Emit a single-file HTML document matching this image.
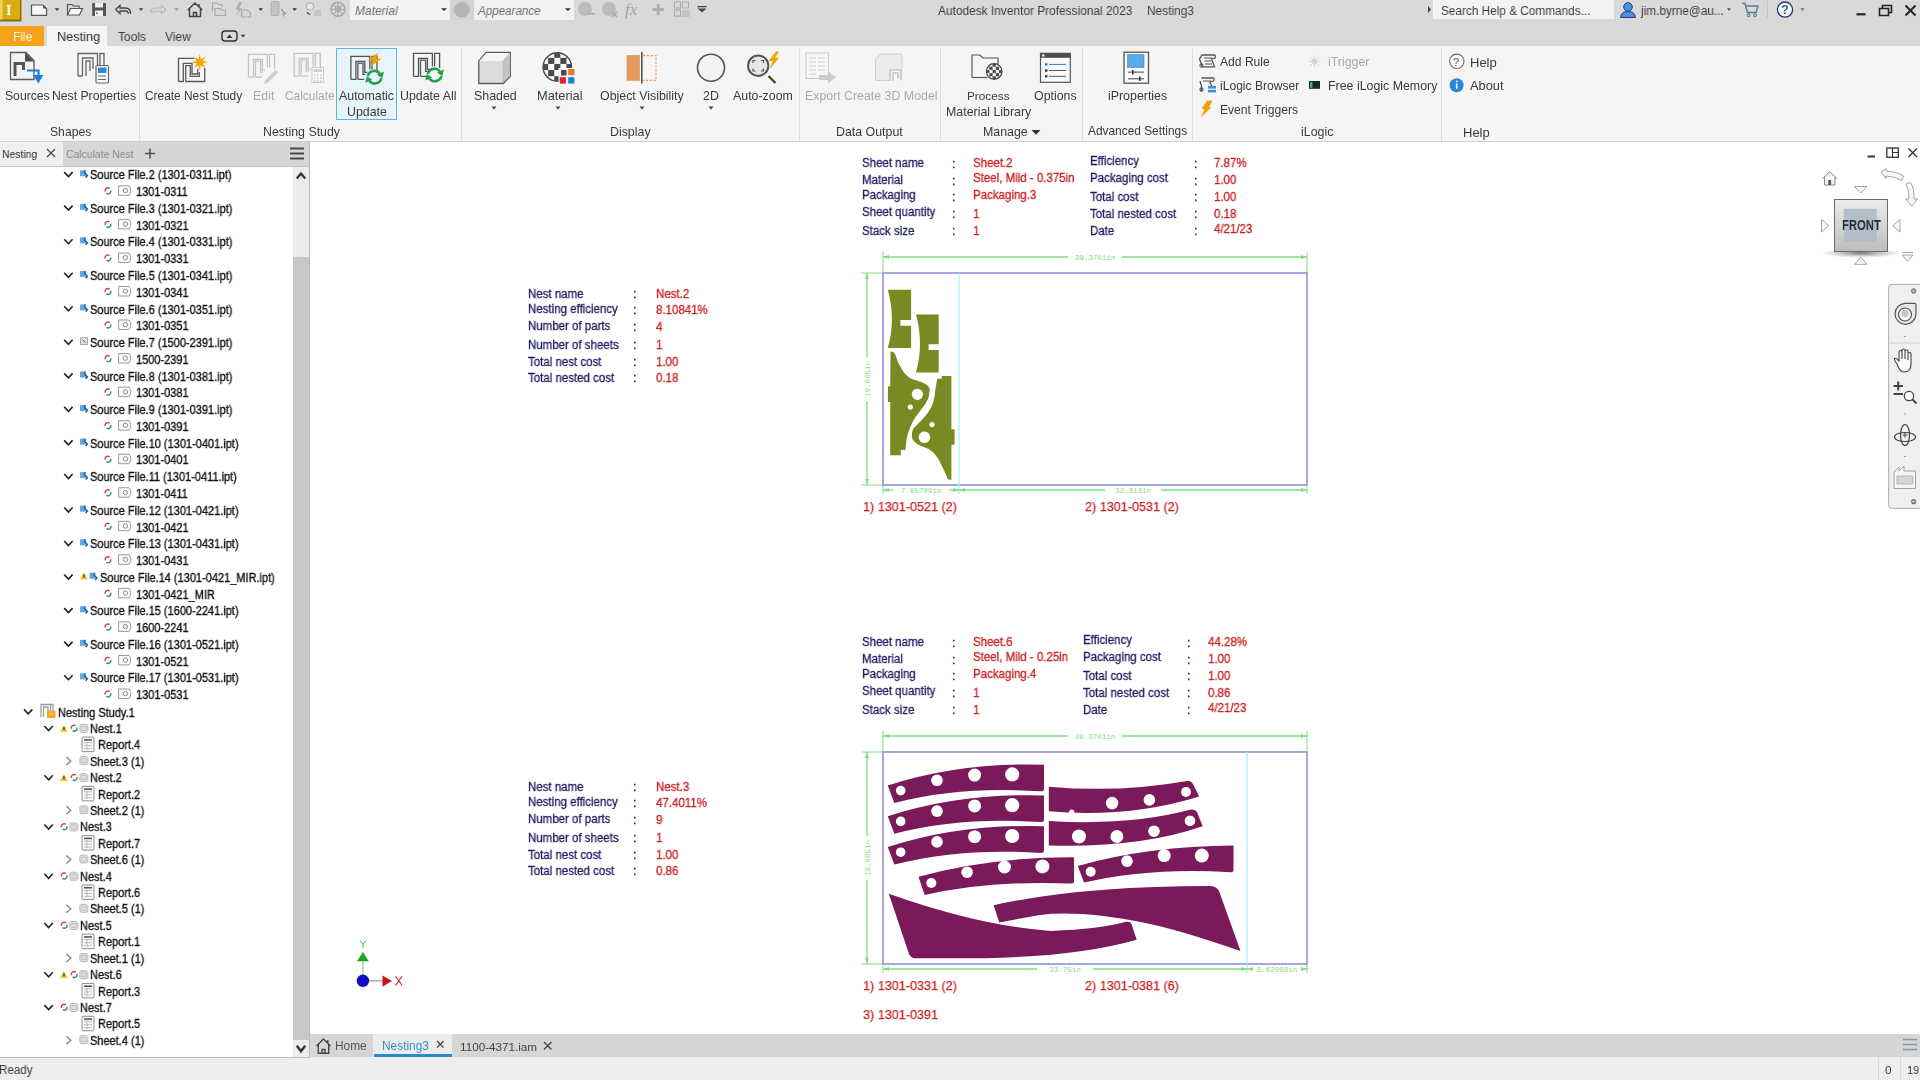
<!DOCTYPE html><html><head><meta charset="utf-8"><style>
*{margin:0;padding:0;box-sizing:border-box}
html,body{width:1920px;height:1080px;overflow:hidden;background:#fff;font-family:"Liberation Sans",sans-serif}
.t{position:absolute;white-space:pre;z-index:3;will-change:transform}
svg.r{z-index:2}
.r{position:absolute;display:block}
</style></head><body>
<div class="r" style="left:0px;top:0px;width:1920px;height:46px;background:#d9d9d9"></div>
<div class="r" style="left:0px;top:46px;width:1920px;height:95px;background:#f5f5f5"></div>
<div class="r" style="left:0px;top:141px;width:1920px;height:1px;background:#d0d0d0"></div>
<div class="r" style="left:0px;top:142px;width:310px;height:915px;background:#ffffff"></div>
<div class="r" style="left:0px;top:142px;width:310px;height:24px;background:#d6d6d6"></div>
<div class="r" style="left:0px;top:142px;width:63px;height:24px;background:#f0f0f0"></div>
<div class="r" style="left:0px;top:166px;width:310px;height:1px;background:#c4c4c4"></div>
<div class="r" style="left:309px;top:142px;width:1px;height:916px;background:#b9b9b9"></div>
<div class="r" style="left:293px;top:167px;width:16px;height:890px;background:#ececec"></div>
<div class="r" style="left:293px;top:257px;width:16px;height:783px;background:#c8c8c8"></div>
<div class="r" style="left:310px;top:142px;width:1610px;height:892px;background:#ffffff"></div>
<div class="r" style="left:310px;top:1034px;width:1610px;height:23px;background:#d6d6d6"></div>
<div class="r" style="left:373px;top:1034px;width:79px;height:23px;background:#ececec"></div>
<div class="r" style="left:374px;top:1054px;width:78px;height:3px;background:#2a8bc2"></div>
<div class="r" style="left:0px;top:1057px;width:1920px;height:23px;background:#eeeeee"></div>
<div class="r" style="left:0px;top:1057px;width:310px;height:1px;background:#bdbdbd"></div>
<div class="r" style="left:1878px;top:1057px;width:1px;height:23px;background:#d8d8d8"></div>
<div class="r" style="left:1900px;top:1057px;width:1px;height:23px;background:#d8d8d8"></div>
<div class="t " style="left:938px;top:4.92px;font-size:12.61px;line-height:12.61px;color:#3c3c3c;transform:scaleX(0.9434);transform-origin:0 0;">Autodesk Inventor Professional 2023</div>
<div class="t " style="left:1147px;top:4.92px;font-size:12.61px;line-height:12.61px;color:#3c3c3c;transform:scaleX(0.9434);transform-origin:0 0;">Nesting3</div>
<div class="r" style="left:350px;top:0px;width:100px;height:20px;background:#f2f2f2"></div>
<div class="t " style="left:355px;top:4.83px;font-size:12.72px;line-height:12.72px;color:#6e6e6e;transform:scaleX(0.9434);transform-origin:0 0;font-style:italic">Material</div>
<div class="r" style="left:474px;top:0px;width:100px;height:20px;background:#f2f2f2"></div>
<div class="t " style="left:478px;top:5.19px;font-size:12.30px;line-height:12.30px;color:#6e6e6e;transform:scaleX(0.9434);transform-origin:0 0;font-style:italic">Appearance</div>
<div class="r" style="left:1433px;top:0px;width:181px;height:19px;background:#f3f3f3"></div>
<div class="t " style="left:1441px;top:5.01px;font-size:12.51px;line-height:12.51px;color:#3c3c3c;transform:scaleX(0.9434);transform-origin:0 0;">Search Help &amp; Commands...</div>
<div class="t " style="left:1641px;top:5.01px;font-size:12.51px;line-height:12.51px;color:#3c3c3c;transform:scaleX(0.9434);transform-origin:0 0;">jim.byrne@au...</div>
<div class="r" style="left:0px;top:26px;width:44px;height:20px;background:#f5a21b"></div>
<div class="t " style="left:13px;top:30.73px;font-size:12.72px;line-height:12.72px;color:#fffbe6;transform:scaleX(0.9434);transform-origin:0 0;">File</div>
<div class="r" style="left:47px;top:26px;width:60px;height:20px;background:#f5f5f5"></div>
<div class="t " style="left:56.5px;top:30.10px;font-size:13.46px;line-height:13.46px;color:#2a2a2a;transform:scaleX(0.9434);transform-origin:0 0;">Nesting</div>
<div class="t " style="left:118px;top:30.73px;font-size:12.72px;line-height:12.72px;color:#3c3c3c;transform:scaleX(0.9434);transform-origin:0 0;">Tools</div>
<div class="t " style="left:165px;top:30.73px;font-size:12.72px;line-height:12.72px;color:#3c3c3c;transform:scaleX(0.9434);transform-origin:0 0;">View</div>
<div class="r" style="left:139px;top:48px;width:1px;height:93px;background:#dcdcdc"></div>
<div class="r" style="left:461px;top:48px;width:1px;height:93px;background:#dcdcdc"></div>
<div class="r" style="left:799px;top:48px;width:1px;height:93px;background:#dcdcdc"></div>
<div class="r" style="left:940px;top:48px;width:1px;height:93px;background:#dcdcdc"></div>
<div class="r" style="left:1082px;top:48px;width:1px;height:93px;background:#dcdcdc"></div>
<div class="r" style="left:1192px;top:48px;width:1px;height:93px;background:#dcdcdc"></div>
<div class="r" style="left:1441px;top:48px;width:1px;height:93px;background:#dcdcdc"></div>
<div class="t " style="left:5px;top:90.29px;font-size:12.18px;line-height:12.18px;color:#3a3a3a;">Sources</div>
<div class="t " style="left:52px;top:90.27px;font-size:12.20px;line-height:12.20px;color:#3a3a3a;">Nest Properties</div>
<div class="t " style="left:145px;top:90.53px;font-size:11.90px;line-height:11.90px;color:#3a3a3a;">Create Nest Study</div>
<div class="t " style="left:253px;top:90.11px;font-size:12.39px;line-height:12.39px;color:#a9a9a9;">Edit</div>
<div class="t " style="left:285px;top:90.53px;font-size:11.90px;line-height:11.90px;color:#a9a9a9;">Calculate</div>
<div class="r" style="left:336px;top:48px;width:61px;height:72px;background:#e8f4fb;border:1px solid #5db3e3"></div>
<div class="t " style="left:339px;top:90.11px;font-size:12.39px;line-height:12.39px;color:#3a3a3a;">Automatic</div>
<div class="t " style="left:347px;top:106.11px;font-size:12.39px;line-height:12.39px;color:#3a3a3a;">Update</div>
<div class="t " style="left:400px;top:90.11px;font-size:12.39px;line-height:12.39px;color:#3a3a3a;">Update All</div>
<div class="t " style="left:474px;top:90.11px;font-size:12.39px;line-height:12.39px;color:#3a3a3a;">Shaded</div>
<div class="t " style="left:536.5px;top:89.76px;font-size:12.80px;line-height:12.80px;color:#3a3a3a;">Material</div>
<div class="t " style="left:600px;top:90.11px;font-size:12.39px;line-height:12.39px;color:#3a3a3a;">Object Visibility</div>
<div class="t " style="left:703px;top:90.11px;font-size:12.39px;line-height:12.39px;color:#3a3a3a;">2D</div>
<div class="t " style="left:733px;top:90.11px;font-size:12.39px;line-height:12.39px;color:#3a3a3a;">Auto-zoom</div>
<div class="t " style="left:805px;top:90.11px;font-size:12.39px;line-height:12.39px;color:#a9a9a9;">Export</div>
<div class="t " style="left:844px;top:90.11px;font-size:12.39px;line-height:12.39px;color:#a9a9a9;">Create 3D Model</div>
<div class="t " style="left:967px;top:90.61px;font-size:11.80px;line-height:11.80px;color:#3a3a3a;">Process</div>
<div class="t " style="left:946px;top:106.11px;font-size:12.39px;line-height:12.39px;color:#3a3a3a;">Material Library</div>
<div class="t " style="left:1034px;top:90.11px;font-size:12.39px;line-height:12.39px;color:#3a3a3a;">Options</div>
<div class="t " style="left:1108px;top:90.11px;font-size:12.39px;line-height:12.39px;color:#3a3a3a;">iProperties</div>
<div class="t " style="left:1220px;top:56.26px;font-size:12.10px;line-height:12.10px;color:#3a3a3a;">Add Rule</div>
<div class="t " style="left:1220px;top:80.26px;font-size:12.10px;line-height:12.10px;color:#3a3a3a;">iLogic Browser</div>
<div class="t " style="left:1220px;top:104.26px;font-size:12.10px;line-height:12.10px;color:#3a3a3a;">Event Triggers</div>
<div class="t " style="left:1328px;top:56.01px;font-size:12.39px;line-height:12.39px;color:#a9a9a9;">iTrigger</div>
<div class="t " style="left:1328px;top:80.01px;font-size:12.39px;line-height:12.39px;color:#3a3a3a;">Free iLogic Memory</div>
<div class="t " style="left:1470px;top:55.50px;font-size:13.00px;line-height:13.00px;color:#3a3a3a;">Help</div>
<div class="t " style="left:1470px;top:79.66px;font-size:12.80px;line-height:12.80px;color:#3a3a3a;">About</div>
<div class="t " style="left:50px;top:126.19px;font-size:12.18px;line-height:12.18px;color:#3a3a3a;">Shapes</div>
<div class="t " style="left:263px;top:126.01px;font-size:12.39px;line-height:12.39px;color:#3a3a3a;">Nesting Study</div>
<div class="t " style="left:610px;top:126.01px;font-size:12.39px;line-height:12.39px;color:#3a3a3a;">Display</div>
<div class="t " style="left:836px;top:126.01px;font-size:12.39px;line-height:12.39px;color:#3a3a3a;">Data Output</div>
<div class="t " style="left:983px;top:126.01px;font-size:12.39px;line-height:12.39px;color:#3a3a3a;">Manage</div>
<div class="t " style="left:1088px;top:126.43px;font-size:11.90px;line-height:11.90px;color:#3a3a3a;">Advanced Settings</div>
<div class="t " style="left:1301px;top:126.01px;font-size:12.39px;line-height:12.39px;color:#3a3a3a;">iLogic</div>
<div class="t " style="left:1463px;top:125.50px;font-size:13.00px;line-height:13.00px;color:#3a3a3a;">Help</div>
<div class="t " style="left:2px;top:149.17px;font-size:11.02px;line-height:11.02px;color:#2a2a2a;transform:scaleX(0.9434);transform-origin:0 0;">Nesting</div>
<div class="t " style="left:66px;top:149.17px;font-size:11.02px;line-height:11.02px;color:#8a8a8a;transform:scaleX(0.9434);transform-origin:0 0;">Calculate Nest</div>
<div class="t " style="left:89.6px;top:169.35px;font-size:11.99px;line-height:11.99px;color:#111;transform:scaleX(0.9174);transform-origin:0 0;-webkit-text-stroke:0.35px #111;">Source File.2 (1301-0311.ipt)</div>
<div class="t " style="left:136px;top:186.12px;font-size:11.99px;line-height:11.99px;color:#111;transform:scaleX(0.9174);transform-origin:0 0;-webkit-text-stroke:0.35px #111;">1301-0311</div>
<div class="t " style="left:89.6px;top:202.89px;font-size:11.99px;line-height:11.99px;color:#111;transform:scaleX(0.9174);transform-origin:0 0;-webkit-text-stroke:0.35px #111;">Source File.3 (1301-0321.ipt)</div>
<div class="t " style="left:136px;top:219.66px;font-size:11.99px;line-height:11.99px;color:#111;transform:scaleX(0.9174);transform-origin:0 0;-webkit-text-stroke:0.35px #111;">1301-0321</div>
<div class="t " style="left:89.6px;top:236.43px;font-size:11.99px;line-height:11.99px;color:#111;transform:scaleX(0.9174);transform-origin:0 0;-webkit-text-stroke:0.35px #111;">Source File.4 (1301-0331.ipt)</div>
<div class="t " style="left:136px;top:253.20px;font-size:11.99px;line-height:11.99px;color:#111;transform:scaleX(0.9174);transform-origin:0 0;-webkit-text-stroke:0.35px #111;">1301-0331</div>
<div class="t " style="left:89.6px;top:269.97px;font-size:11.99px;line-height:11.99px;color:#111;transform:scaleX(0.9174);transform-origin:0 0;-webkit-text-stroke:0.35px #111;">Source File.5 (1301-0341.ipt)</div>
<div class="t " style="left:136px;top:286.74px;font-size:11.99px;line-height:11.99px;color:#111;transform:scaleX(0.9174);transform-origin:0 0;-webkit-text-stroke:0.35px #111;">1301-0341</div>
<div class="t " style="left:89.6px;top:303.51px;font-size:11.99px;line-height:11.99px;color:#111;transform:scaleX(0.9174);transform-origin:0 0;-webkit-text-stroke:0.35px #111;">Source File.6 (1301-0351.ipt)</div>
<div class="t " style="left:136px;top:320.28px;font-size:11.99px;line-height:11.99px;color:#111;transform:scaleX(0.9174);transform-origin:0 0;-webkit-text-stroke:0.35px #111;">1301-0351</div>
<div class="t " style="left:89.6px;top:337.05px;font-size:11.99px;line-height:11.99px;color:#111;transform:scaleX(0.9174);transform-origin:0 0;-webkit-text-stroke:0.35px #111;">Source File.7 (1500-2391.ipt)</div>
<div class="t " style="left:136px;top:353.82px;font-size:11.99px;line-height:11.99px;color:#111;transform:scaleX(0.9174);transform-origin:0 0;-webkit-text-stroke:0.35px #111;">1500-2391</div>
<div class="t " style="left:89.6px;top:370.59px;font-size:11.99px;line-height:11.99px;color:#111;transform:scaleX(0.9174);transform-origin:0 0;-webkit-text-stroke:0.35px #111;">Source File.8 (1301-0381.ipt)</div>
<div class="t " style="left:136px;top:387.36px;font-size:11.99px;line-height:11.99px;color:#111;transform:scaleX(0.9174);transform-origin:0 0;-webkit-text-stroke:0.35px #111;">1301-0381</div>
<div class="t " style="left:89.6px;top:404.13px;font-size:11.99px;line-height:11.99px;color:#111;transform:scaleX(0.9174);transform-origin:0 0;-webkit-text-stroke:0.35px #111;">Source File.9 (1301-0391.ipt)</div>
<div class="t " style="left:136px;top:420.90px;font-size:11.99px;line-height:11.99px;color:#111;transform:scaleX(0.9174);transform-origin:0 0;-webkit-text-stroke:0.35px #111;">1301-0391</div>
<div class="t " style="left:89.6px;top:437.67px;font-size:11.99px;line-height:11.99px;color:#111;transform:scaleX(0.9174);transform-origin:0 0;-webkit-text-stroke:0.35px #111;">Source File.10 (1301-0401.ipt)</div>
<div class="t " style="left:136px;top:454.44px;font-size:11.99px;line-height:11.99px;color:#111;transform:scaleX(0.9174);transform-origin:0 0;-webkit-text-stroke:0.35px #111;">1301-0401</div>
<div class="t " style="left:89.6px;top:471.21px;font-size:11.99px;line-height:11.99px;color:#111;transform:scaleX(0.9174);transform-origin:0 0;-webkit-text-stroke:0.35px #111;">Source File.11 (1301-0411.ipt)</div>
<div class="t " style="left:136px;top:487.98px;font-size:11.99px;line-height:11.99px;color:#111;transform:scaleX(0.9174);transform-origin:0 0;-webkit-text-stroke:0.35px #111;">1301-0411</div>
<div class="t " style="left:89.6px;top:504.75px;font-size:11.99px;line-height:11.99px;color:#111;transform:scaleX(0.9174);transform-origin:0 0;-webkit-text-stroke:0.35px #111;">Source File.12 (1301-0421.ipt)</div>
<div class="t " style="left:136px;top:521.52px;font-size:11.99px;line-height:11.99px;color:#111;transform:scaleX(0.9174);transform-origin:0 0;-webkit-text-stroke:0.35px #111;">1301-0421</div>
<div class="t " style="left:89.6px;top:538.29px;font-size:11.99px;line-height:11.99px;color:#111;transform:scaleX(0.9174);transform-origin:0 0;-webkit-text-stroke:0.35px #111;">Source File.13 (1301-0431.ipt)</div>
<div class="t " style="left:136px;top:555.06px;font-size:11.99px;line-height:11.99px;color:#111;transform:scaleX(0.9174);transform-origin:0 0;-webkit-text-stroke:0.35px #111;">1301-0431</div>
<div class="t " style="left:99.5px;top:571.83px;font-size:11.99px;line-height:11.99px;color:#111;transform:scaleX(0.9174);transform-origin:0 0;-webkit-text-stroke:0.35px #111;">Source File.14 (1301-0421_MIR.ipt)</div>
<div class="t " style="left:136px;top:588.60px;font-size:11.99px;line-height:11.99px;color:#111;transform:scaleX(0.9174);transform-origin:0 0;-webkit-text-stroke:0.35px #111;">1301-0421_MIR</div>
<div class="t " style="left:89.6px;top:605.37px;font-size:11.99px;line-height:11.99px;color:#111;transform:scaleX(0.9174);transform-origin:0 0;-webkit-text-stroke:0.35px #111;">Source File.15 (1600-2241.ipt)</div>
<div class="t " style="left:136px;top:622.14px;font-size:11.99px;line-height:11.99px;color:#111;transform:scaleX(0.9174);transform-origin:0 0;-webkit-text-stroke:0.35px #111;">1600-2241</div>
<div class="t " style="left:89.6px;top:638.91px;font-size:11.99px;line-height:11.99px;color:#111;transform:scaleX(0.9174);transform-origin:0 0;-webkit-text-stroke:0.35px #111;">Source File.16 (1301-0521.ipt)</div>
<div class="t " style="left:136px;top:655.68px;font-size:11.99px;line-height:11.99px;color:#111;transform:scaleX(0.9174);transform-origin:0 0;-webkit-text-stroke:0.35px #111;">1301-0521</div>
<div class="t " style="left:89.6px;top:672.45px;font-size:11.99px;line-height:11.99px;color:#111;transform:scaleX(0.9174);transform-origin:0 0;-webkit-text-stroke:0.35px #111;">Source File.17 (1301-0531.ipt)</div>
<div class="t " style="left:136px;top:689.22px;font-size:11.99px;line-height:11.99px;color:#111;transform:scaleX(0.9174);transform-origin:0 0;-webkit-text-stroke:0.35px #111;">1301-0531</div>
<div class="t " style="left:57.6px;top:706.65px;font-size:11.99px;line-height:11.99px;color:#111;transform:scaleX(0.9174);transform-origin:0 0;-webkit-text-stroke:0.35px #111;">Nesting Study.1</div>
<div class="t " style="left:89.6px;top:722.85px;font-size:11.99px;line-height:11.99px;color:#111;transform:scaleX(0.9174);transform-origin:0 0;-webkit-text-stroke:0.35px #111;">Nest.1</div>
<div class="t " style="left:97.5px;top:739.27px;font-size:11.99px;line-height:11.99px;color:#111;transform:scaleX(0.9174);transform-origin:0 0;-webkit-text-stroke:0.35px #111;">Report.4</div>
<div class="t " style="left:89.6px;top:755.69px;font-size:11.99px;line-height:11.99px;color:#111;transform:scaleX(0.9174);transform-origin:0 0;-webkit-text-stroke:0.35px #111;">Sheet.3 (1)</div>
<div class="t " style="left:89.6px;top:772.11px;font-size:11.99px;line-height:11.99px;color:#111;transform:scaleX(0.9174);transform-origin:0 0;-webkit-text-stroke:0.35px #111;">Nest.2</div>
<div class="t " style="left:97.5px;top:788.53px;font-size:11.99px;line-height:11.99px;color:#111;transform:scaleX(0.9174);transform-origin:0 0;-webkit-text-stroke:0.35px #111;">Report.2</div>
<div class="t " style="left:89.6px;top:804.95px;font-size:11.99px;line-height:11.99px;color:#111;transform:scaleX(0.9174);transform-origin:0 0;-webkit-text-stroke:0.35px #111;">Sheet.2 (1)</div>
<div class="t " style="left:79.5px;top:821.37px;font-size:11.99px;line-height:11.99px;color:#111;transform:scaleX(0.9174);transform-origin:0 0;-webkit-text-stroke:0.35px #111;">Nest.3</div>
<div class="t " style="left:97.5px;top:837.79px;font-size:11.99px;line-height:11.99px;color:#111;transform:scaleX(0.9174);transform-origin:0 0;-webkit-text-stroke:0.35px #111;">Report.7</div>
<div class="t " style="left:89.6px;top:854.21px;font-size:11.99px;line-height:11.99px;color:#111;transform:scaleX(0.9174);transform-origin:0 0;-webkit-text-stroke:0.35px #111;">Sheet.6 (1)</div>
<div class="t " style="left:79.5px;top:870.63px;font-size:11.99px;line-height:11.99px;color:#111;transform:scaleX(0.9174);transform-origin:0 0;-webkit-text-stroke:0.35px #111;">Nest.4</div>
<div class="t " style="left:97.5px;top:887.05px;font-size:11.99px;line-height:11.99px;color:#111;transform:scaleX(0.9174);transform-origin:0 0;-webkit-text-stroke:0.35px #111;">Report.6</div>
<div class="t " style="left:89.6px;top:903.47px;font-size:11.99px;line-height:11.99px;color:#111;transform:scaleX(0.9174);transform-origin:0 0;-webkit-text-stroke:0.35px #111;">Sheet.5 (1)</div>
<div class="t " style="left:79.5px;top:919.89px;font-size:11.99px;line-height:11.99px;color:#111;transform:scaleX(0.9174);transform-origin:0 0;-webkit-text-stroke:0.35px #111;">Nest.5</div>
<div class="t " style="left:97.5px;top:936.31px;font-size:11.99px;line-height:11.99px;color:#111;transform:scaleX(0.9174);transform-origin:0 0;-webkit-text-stroke:0.35px #111;">Report.1</div>
<div class="t " style="left:89.6px;top:952.73px;font-size:11.99px;line-height:11.99px;color:#111;transform:scaleX(0.9174);transform-origin:0 0;-webkit-text-stroke:0.35px #111;">Sheet.1 (1)</div>
<div class="t " style="left:89.6px;top:969.15px;font-size:11.99px;line-height:11.99px;color:#111;transform:scaleX(0.9174);transform-origin:0 0;-webkit-text-stroke:0.35px #111;">Nest.6</div>
<div class="t " style="left:97.5px;top:985.57px;font-size:11.99px;line-height:11.99px;color:#111;transform:scaleX(0.9174);transform-origin:0 0;-webkit-text-stroke:0.35px #111;">Report.3</div>
<div class="t " style="left:79.5px;top:1001.99px;font-size:11.99px;line-height:11.99px;color:#111;transform:scaleX(0.9174);transform-origin:0 0;-webkit-text-stroke:0.35px #111;">Nest.7</div>
<div class="t " style="left:97.5px;top:1018.41px;font-size:11.99px;line-height:11.99px;color:#111;transform:scaleX(0.9174);transform-origin:0 0;-webkit-text-stroke:0.35px #111;">Report.5</div>
<div class="t " style="left:89.6px;top:1034.83px;font-size:11.99px;line-height:11.99px;color:#111;transform:scaleX(0.9174);transform-origin:0 0;-webkit-text-stroke:0.35px #111;">Sheet.4 (1)</div>
<div class="t " style="left:335px;top:1040.93px;font-size:11.90px;line-height:11.90px;color:#555;">Home</div>
<div class="t " style="left:382px;top:1040.93px;font-size:11.90px;line-height:11.90px;color:#3a8fc0;">Nesting3</div>
<div class="t " style="left:460px;top:1041.10px;font-size:11.70px;line-height:11.70px;color:#444;">1100-4371.iam</div>
<div class="t " style="left:-1px;top:1064.39px;font-size:12.30px;line-height:12.30px;color:#3a3a3a;transform:scaleX(0.9434);transform-origin:0 0;">Ready</div>
<div class="t " style="left:1885px;top:1064.13px;font-size:11.66px;line-height:11.66px;color:#333;transform:scaleX(0.9434);transform-origin:0 0;">0</div>
<div class="t " style="left:1907px;top:1064.13px;font-size:11.66px;line-height:11.66px;color:#333;transform:scaleX(0.9434);transform-origin:0 0;">19</div>
<div class="t " style="left:528px;top:288.29px;font-size:12.42px;line-height:12.42px;color:#1b1b62;transform:scaleX(0.9259);transform-origin:0 0;-webkit-text-stroke:0.3px #1b1b62;">Nest name</div>
<div class="t " style="left:633px;top:288.29px;font-size:12.42px;line-height:12.42px;color:#1b1b62;transform:scaleX(0.9259);transform-origin:0 0;-webkit-text-stroke:0.3px #1b1b62;">:</div>
<div class="t " style="left:655.5px;top:288.29px;font-size:12.42px;line-height:12.42px;color:#cc2020;transform:scaleX(0.9259);transform-origin:0 0;-webkit-text-stroke:0.3px #cc2020;">Nest.2</div>
<div class="t " style="left:528px;top:303.19px;font-size:12.42px;line-height:12.42px;color:#1b1b62;transform:scaleX(0.9259);transform-origin:0 0;-webkit-text-stroke:0.3px #1b1b62;">Nesting efficiency</div>
<div class="t " style="left:633px;top:304.49px;font-size:12.42px;line-height:12.42px;color:#1b1b62;transform:scaleX(0.9259);transform-origin:0 0;-webkit-text-stroke:0.3px #1b1b62;">:</div>
<div class="t " style="left:655.5px;top:304.49px;font-size:12.42px;line-height:12.42px;color:#cc2020;transform:scaleX(0.9259);transform-origin:0 0;-webkit-text-stroke:0.3px #cc2020;">8.10841%</div>
<div class="t " style="left:528px;top:319.69px;font-size:12.42px;line-height:12.42px;color:#1b1b62;transform:scaleX(0.9259);transform-origin:0 0;-webkit-text-stroke:0.3px #1b1b62;">Number of parts</div>
<div class="t " style="left:633px;top:321.49px;font-size:12.42px;line-height:12.42px;color:#1b1b62;transform:scaleX(0.9259);transform-origin:0 0;-webkit-text-stroke:0.3px #1b1b62;">:</div>
<div class="t " style="left:655.5px;top:321.49px;font-size:12.42px;line-height:12.42px;color:#cc2020;transform:scaleX(0.9259);transform-origin:0 0;-webkit-text-stroke:0.3px #cc2020;">4</div>
<div class="t " style="left:528px;top:338.79px;font-size:12.42px;line-height:12.42px;color:#1b1b62;transform:scaleX(0.9259);transform-origin:0 0;-webkit-text-stroke:0.3px #1b1b62;">Number of sheets</div>
<div class="t " style="left:633px;top:338.79px;font-size:12.42px;line-height:12.42px;color:#1b1b62;transform:scaleX(0.9259);transform-origin:0 0;-webkit-text-stroke:0.3px #1b1b62;">:</div>
<div class="t " style="left:655.5px;top:338.79px;font-size:12.42px;line-height:12.42px;color:#cc2020;transform:scaleX(0.9259);transform-origin:0 0;-webkit-text-stroke:0.3px #cc2020;">1</div>
<div class="t " style="left:528px;top:355.59px;font-size:12.42px;line-height:12.42px;color:#1b1b62;transform:scaleX(0.9259);transform-origin:0 0;-webkit-text-stroke:0.3px #1b1b62;">Total nest cost</div>
<div class="t " style="left:633px;top:355.59px;font-size:12.42px;line-height:12.42px;color:#1b1b62;transform:scaleX(0.9259);transform-origin:0 0;-webkit-text-stroke:0.3px #1b1b62;">:</div>
<div class="t " style="left:655.5px;top:355.59px;font-size:12.42px;line-height:12.42px;color:#cc2020;transform:scaleX(0.9259);transform-origin:0 0;-webkit-text-stroke:0.3px #cc2020;">1.00</div>
<div class="t " style="left:528px;top:372.49px;font-size:12.42px;line-height:12.42px;color:#1b1b62;transform:scaleX(0.9259);transform-origin:0 0;-webkit-text-stroke:0.3px #1b1b62;">Total nested cost</div>
<div class="t " style="left:633px;top:372.49px;font-size:12.42px;line-height:12.42px;color:#1b1b62;transform:scaleX(0.9259);transform-origin:0 0;-webkit-text-stroke:0.3px #1b1b62;">:</div>
<div class="t " style="left:655.5px;top:372.49px;font-size:12.42px;line-height:12.42px;color:#cc2020;transform:scaleX(0.9259);transform-origin:0 0;-webkit-text-stroke:0.3px #cc2020;">0.18</div>
<div class="t " style="left:528px;top:781.29px;font-size:12.42px;line-height:12.42px;color:#1b1b62;transform:scaleX(0.9259);transform-origin:0 0;-webkit-text-stroke:0.3px #1b1b62;">Nest name</div>
<div class="t " style="left:633px;top:781.29px;font-size:12.42px;line-height:12.42px;color:#1b1b62;transform:scaleX(0.9259);transform-origin:0 0;-webkit-text-stroke:0.3px #1b1b62;">:</div>
<div class="t " style="left:655.5px;top:781.29px;font-size:12.42px;line-height:12.42px;color:#cc2020;transform:scaleX(0.9259);transform-origin:0 0;-webkit-text-stroke:0.3px #cc2020;">Nest.3</div>
<div class="t " style="left:528px;top:796.19px;font-size:12.42px;line-height:12.42px;color:#1b1b62;transform:scaleX(0.9259);transform-origin:0 0;-webkit-text-stroke:0.3px #1b1b62;">Nesting efficiency</div>
<div class="t " style="left:633px;top:797.49px;font-size:12.42px;line-height:12.42px;color:#1b1b62;transform:scaleX(0.9259);transform-origin:0 0;-webkit-text-stroke:0.3px #1b1b62;">:</div>
<div class="t " style="left:655.5px;top:797.49px;font-size:12.42px;line-height:12.42px;color:#cc2020;transform:scaleX(0.9259);transform-origin:0 0;-webkit-text-stroke:0.3px #cc2020;">47.4011%</div>
<div class="t " style="left:528px;top:812.69px;font-size:12.42px;line-height:12.42px;color:#1b1b62;transform:scaleX(0.9259);transform-origin:0 0;-webkit-text-stroke:0.3px #1b1b62;">Number of parts</div>
<div class="t " style="left:633px;top:814.49px;font-size:12.42px;line-height:12.42px;color:#1b1b62;transform:scaleX(0.9259);transform-origin:0 0;-webkit-text-stroke:0.3px #1b1b62;">:</div>
<div class="t " style="left:655.5px;top:814.49px;font-size:12.42px;line-height:12.42px;color:#cc2020;transform:scaleX(0.9259);transform-origin:0 0;-webkit-text-stroke:0.3px #cc2020;">9</div>
<div class="t " style="left:528px;top:831.79px;font-size:12.42px;line-height:12.42px;color:#1b1b62;transform:scaleX(0.9259);transform-origin:0 0;-webkit-text-stroke:0.3px #1b1b62;">Number of sheets</div>
<div class="t " style="left:633px;top:831.79px;font-size:12.42px;line-height:12.42px;color:#1b1b62;transform:scaleX(0.9259);transform-origin:0 0;-webkit-text-stroke:0.3px #1b1b62;">:</div>
<div class="t " style="left:655.5px;top:831.79px;font-size:12.42px;line-height:12.42px;color:#cc2020;transform:scaleX(0.9259);transform-origin:0 0;-webkit-text-stroke:0.3px #cc2020;">1</div>
<div class="t " style="left:528px;top:848.59px;font-size:12.42px;line-height:12.42px;color:#1b1b62;transform:scaleX(0.9259);transform-origin:0 0;-webkit-text-stroke:0.3px #1b1b62;">Total nest cost</div>
<div class="t " style="left:633px;top:848.59px;font-size:12.42px;line-height:12.42px;color:#1b1b62;transform:scaleX(0.9259);transform-origin:0 0;-webkit-text-stroke:0.3px #1b1b62;">:</div>
<div class="t " style="left:655.5px;top:848.59px;font-size:12.42px;line-height:12.42px;color:#cc2020;transform:scaleX(0.9259);transform-origin:0 0;-webkit-text-stroke:0.3px #cc2020;">1.00</div>
<div class="t " style="left:528px;top:865.49px;font-size:12.42px;line-height:12.42px;color:#1b1b62;transform:scaleX(0.9259);transform-origin:0 0;-webkit-text-stroke:0.3px #1b1b62;">Total nested cost</div>
<div class="t " style="left:633px;top:865.49px;font-size:12.42px;line-height:12.42px;color:#1b1b62;transform:scaleX(0.9259);transform-origin:0 0;-webkit-text-stroke:0.3px #1b1b62;">:</div>
<div class="t " style="left:655.5px;top:865.49px;font-size:12.42px;line-height:12.42px;color:#cc2020;transform:scaleX(0.9259);transform-origin:0 0;-webkit-text-stroke:0.3px #cc2020;">0.86</div>
<div class="t " style="left:862px;top:157.24px;font-size:12.42px;line-height:12.42px;color:#1b1b62;transform:scaleX(0.9259);transform-origin:0 0;-webkit-text-stroke:0.3px #1b1b62;">Sheet name</div>
<div class="t " style="left:952px;top:158.49px;font-size:12.42px;line-height:12.42px;color:#1b1b62;transform:scaleX(0.9259);transform-origin:0 0;-webkit-text-stroke:0.3px #1b1b62;">:</div>
<div class="t " style="left:973.25px;top:157.24px;font-size:12.42px;line-height:12.42px;color:#cc2020;transform:scaleX(0.9259);transform-origin:0 0;-webkit-text-stroke:0.3px #cc2020;">Sheet.2</div>
<div class="t " style="left:862px;top:174.24px;font-size:12.42px;line-height:12.42px;color:#1b1b62;transform:scaleX(0.9259);transform-origin:0 0;-webkit-text-stroke:0.3px #1b1b62;">Material</div>
<div class="t " style="left:952px;top:175.49px;font-size:12.42px;line-height:12.42px;color:#1b1b62;transform:scaleX(0.9259);transform-origin:0 0;-webkit-text-stroke:0.3px #1b1b62;">:</div>
<div class="t " style="left:973.25px;top:171.74px;font-size:12.42px;line-height:12.42px;color:#cc2020;transform:scaleX(0.9259);transform-origin:0 0;-webkit-text-stroke:0.3px #cc2020;">Steel, Mild - 0.375in</div>
<div class="t " style="left:862px;top:189.24px;font-size:12.42px;line-height:12.42px;color:#1b1b62;transform:scaleX(0.9259);transform-origin:0 0;-webkit-text-stroke:0.3px #1b1b62;">Packaging</div>
<div class="t " style="left:952px;top:191.49px;font-size:12.42px;line-height:12.42px;color:#1b1b62;transform:scaleX(0.9259);transform-origin:0 0;-webkit-text-stroke:0.3px #1b1b62;">:</div>
<div class="t " style="left:973.25px;top:188.74px;font-size:12.42px;line-height:12.42px;color:#cc2020;transform:scaleX(0.9259);transform-origin:0 0;-webkit-text-stroke:0.3px #cc2020;">Packaging.3</div>
<div class="t " style="left:862px;top:205.99px;font-size:12.42px;line-height:12.42px;color:#1b1b62;transform:scaleX(0.9259);transform-origin:0 0;-webkit-text-stroke:0.3px #1b1b62;">Sheet quantity</div>
<div class="t " style="left:952px;top:208.49px;font-size:12.42px;line-height:12.42px;color:#1b1b62;transform:scaleX(0.9259);transform-origin:0 0;-webkit-text-stroke:0.3px #1b1b62;">:</div>
<div class="t " style="left:973.25px;top:207.99px;font-size:12.42px;line-height:12.42px;color:#cc2020;transform:scaleX(0.9259);transform-origin:0 0;-webkit-text-stroke:0.3px #cc2020;">1</div>
<div class="t " style="left:862px;top:224.99px;font-size:12.42px;line-height:12.42px;color:#1b1b62;transform:scaleX(0.9259);transform-origin:0 0;-webkit-text-stroke:0.3px #1b1b62;">Stack size</div>
<div class="t " style="left:952px;top:225.49px;font-size:12.42px;line-height:12.42px;color:#1b1b62;transform:scaleX(0.9259);transform-origin:0 0;-webkit-text-stroke:0.3px #1b1b62;">:</div>
<div class="t " style="left:973.25px;top:224.99px;font-size:12.42px;line-height:12.42px;color:#cc2020;transform:scaleX(0.9259);transform-origin:0 0;-webkit-text-stroke:0.3px #cc2020;">1</div>
<div class="t " style="left:1089.5px;top:155.49px;font-size:12.42px;line-height:12.42px;color:#1b1b62;transform:scaleX(0.9259);transform-origin:0 0;-webkit-text-stroke:0.3px #1b1b62;">Efficiency</div>
<div class="t " style="left:1193.5px;top:158.49px;font-size:12.42px;line-height:12.42px;color:#1b1b62;transform:scaleX(0.9259);transform-origin:0 0;-webkit-text-stroke:0.3px #1b1b62;">:</div>
<div class="t " style="left:1213.75px;top:156.74px;font-size:12.42px;line-height:12.42px;color:#cc2020;transform:scaleX(0.9259);transform-origin:0 0;-webkit-text-stroke:0.3px #cc2020;">7.87%</div>
<div class="t " style="left:1089.5px;top:172.49px;font-size:12.42px;line-height:12.42px;color:#1b1b62;transform:scaleX(0.9259);transform-origin:0 0;-webkit-text-stroke:0.3px #1b1b62;">Packaging cost</div>
<div class="t " style="left:1193.5px;top:175.49px;font-size:12.42px;line-height:12.42px;color:#1b1b62;transform:scaleX(0.9259);transform-origin:0 0;-webkit-text-stroke:0.3px #1b1b62;">:</div>
<div class="t " style="left:1213.75px;top:174.24px;font-size:12.42px;line-height:12.42px;color:#cc2020;transform:scaleX(0.9259);transform-origin:0 0;-webkit-text-stroke:0.3px #cc2020;">1.00</div>
<div class="t " style="left:1089.5px;top:191.24px;font-size:12.42px;line-height:12.42px;color:#1b1b62;transform:scaleX(0.9259);transform-origin:0 0;-webkit-text-stroke:0.3px #1b1b62;">Total cost</div>
<div class="t " style="left:1193.5px;top:191.49px;font-size:12.42px;line-height:12.42px;color:#1b1b62;transform:scaleX(0.9259);transform-origin:0 0;-webkit-text-stroke:0.3px #1b1b62;">:</div>
<div class="t " style="left:1213.75px;top:191.24px;font-size:12.42px;line-height:12.42px;color:#cc2020;transform:scaleX(0.9259);transform-origin:0 0;-webkit-text-stroke:0.3px #cc2020;">1.00</div>
<div class="t " style="left:1089.5px;top:208.49px;font-size:12.42px;line-height:12.42px;color:#1b1b62;transform:scaleX(0.9259);transform-origin:0 0;-webkit-text-stroke:0.3px #1b1b62;">Total nested cost</div>
<div class="t " style="left:1193.5px;top:208.49px;font-size:12.42px;line-height:12.42px;color:#1b1b62;transform:scaleX(0.9259);transform-origin:0 0;-webkit-text-stroke:0.3px #1b1b62;">:</div>
<div class="t " style="left:1213.75px;top:208.49px;font-size:12.42px;line-height:12.42px;color:#cc2020;transform:scaleX(0.9259);transform-origin:0 0;-webkit-text-stroke:0.3px #cc2020;">0.18</div>
<div class="t " style="left:1089.5px;top:224.99px;font-size:12.42px;line-height:12.42px;color:#1b1b62;transform:scaleX(0.9259);transform-origin:0 0;-webkit-text-stroke:0.3px #1b1b62;">Date</div>
<div class="t " style="left:1193.5px;top:225.49px;font-size:12.42px;line-height:12.42px;color:#1b1b62;transform:scaleX(0.9259);transform-origin:0 0;-webkit-text-stroke:0.3px #1b1b62;">:</div>
<div class="t " style="left:1213.75px;top:223.49px;font-size:12.42px;line-height:12.42px;color:#cc2020;transform:scaleX(0.9259);transform-origin:0 0;-webkit-text-stroke:0.3px #cc2020;">4/21/23</div>
<div class="t " style="left:862px;top:636.24px;font-size:12.42px;line-height:12.42px;color:#1b1b62;transform:scaleX(0.9259);transform-origin:0 0;-webkit-text-stroke:0.3px #1b1b62;">Sheet name</div>
<div class="t " style="left:952px;top:637.49px;font-size:12.42px;line-height:12.42px;color:#1b1b62;transform:scaleX(0.9259);transform-origin:0 0;-webkit-text-stroke:0.3px #1b1b62;">:</div>
<div class="t " style="left:973.25px;top:636.24px;font-size:12.42px;line-height:12.42px;color:#cc2020;transform:scaleX(0.9259);transform-origin:0 0;-webkit-text-stroke:0.3px #cc2020;">Sheet.6</div>
<div class="t " style="left:862px;top:653.24px;font-size:12.42px;line-height:12.42px;color:#1b1b62;transform:scaleX(0.9259);transform-origin:0 0;-webkit-text-stroke:0.3px #1b1b62;">Material</div>
<div class="t " style="left:952px;top:654.49px;font-size:12.42px;line-height:12.42px;color:#1b1b62;transform:scaleX(0.9259);transform-origin:0 0;-webkit-text-stroke:0.3px #1b1b62;">:</div>
<div class="t " style="left:973.25px;top:650.74px;font-size:12.42px;line-height:12.42px;color:#cc2020;transform:scaleX(0.9259);transform-origin:0 0;-webkit-text-stroke:0.3px #cc2020;">Steel, Mild - 0.25in</div>
<div class="t " style="left:862px;top:668.24px;font-size:12.42px;line-height:12.42px;color:#1b1b62;transform:scaleX(0.9259);transform-origin:0 0;-webkit-text-stroke:0.3px #1b1b62;">Packaging</div>
<div class="t " style="left:952px;top:670.49px;font-size:12.42px;line-height:12.42px;color:#1b1b62;transform:scaleX(0.9259);transform-origin:0 0;-webkit-text-stroke:0.3px #1b1b62;">:</div>
<div class="t " style="left:973.25px;top:667.74px;font-size:12.42px;line-height:12.42px;color:#cc2020;transform:scaleX(0.9259);transform-origin:0 0;-webkit-text-stroke:0.3px #cc2020;">Packaging.4</div>
<div class="t " style="left:862px;top:684.99px;font-size:12.42px;line-height:12.42px;color:#1b1b62;transform:scaleX(0.9259);transform-origin:0 0;-webkit-text-stroke:0.3px #1b1b62;">Sheet quantity</div>
<div class="t " style="left:952px;top:687.49px;font-size:12.42px;line-height:12.42px;color:#1b1b62;transform:scaleX(0.9259);transform-origin:0 0;-webkit-text-stroke:0.3px #1b1b62;">:</div>
<div class="t " style="left:973.25px;top:686.99px;font-size:12.42px;line-height:12.42px;color:#cc2020;transform:scaleX(0.9259);transform-origin:0 0;-webkit-text-stroke:0.3px #cc2020;">1</div>
<div class="t " style="left:862px;top:703.99px;font-size:12.42px;line-height:12.42px;color:#1b1b62;transform:scaleX(0.9259);transform-origin:0 0;-webkit-text-stroke:0.3px #1b1b62;">Stack size</div>
<div class="t " style="left:952px;top:704.49px;font-size:12.42px;line-height:12.42px;color:#1b1b62;transform:scaleX(0.9259);transform-origin:0 0;-webkit-text-stroke:0.3px #1b1b62;">:</div>
<div class="t " style="left:973.25px;top:703.99px;font-size:12.42px;line-height:12.42px;color:#cc2020;transform:scaleX(0.9259);transform-origin:0 0;-webkit-text-stroke:0.3px #cc2020;">1</div>
<div class="t " style="left:1083.25px;top:634.49px;font-size:12.42px;line-height:12.42px;color:#1b1b62;transform:scaleX(0.9259);transform-origin:0 0;-webkit-text-stroke:0.3px #1b1b62;">Efficiency</div>
<div class="t " style="left:1187.25px;top:637.49px;font-size:12.42px;line-height:12.42px;color:#1b1b62;transform:scaleX(0.9259);transform-origin:0 0;-webkit-text-stroke:0.3px #1b1b62;">:</div>
<div class="t " style="left:1207.5px;top:635.74px;font-size:12.42px;line-height:12.42px;color:#cc2020;transform:scaleX(0.9259);transform-origin:0 0;-webkit-text-stroke:0.3px #cc2020;">44.28%</div>
<div class="t " style="left:1083.25px;top:651.49px;font-size:12.42px;line-height:12.42px;color:#1b1b62;transform:scaleX(0.9259);transform-origin:0 0;-webkit-text-stroke:0.3px #1b1b62;">Packaging cost</div>
<div class="t " style="left:1187.25px;top:654.49px;font-size:12.42px;line-height:12.42px;color:#1b1b62;transform:scaleX(0.9259);transform-origin:0 0;-webkit-text-stroke:0.3px #1b1b62;">:</div>
<div class="t " style="left:1207.5px;top:653.24px;font-size:12.42px;line-height:12.42px;color:#cc2020;transform:scaleX(0.9259);transform-origin:0 0;-webkit-text-stroke:0.3px #cc2020;">1.00</div>
<div class="t " style="left:1083.25px;top:670.24px;font-size:12.42px;line-height:12.42px;color:#1b1b62;transform:scaleX(0.9259);transform-origin:0 0;-webkit-text-stroke:0.3px #1b1b62;">Total cost</div>
<div class="t " style="left:1187.25px;top:670.49px;font-size:12.42px;line-height:12.42px;color:#1b1b62;transform:scaleX(0.9259);transform-origin:0 0;-webkit-text-stroke:0.3px #1b1b62;">:</div>
<div class="t " style="left:1207.5px;top:670.24px;font-size:12.42px;line-height:12.42px;color:#cc2020;transform:scaleX(0.9259);transform-origin:0 0;-webkit-text-stroke:0.3px #cc2020;">1.00</div>
<div class="t " style="left:1083.25px;top:687.49px;font-size:12.42px;line-height:12.42px;color:#1b1b62;transform:scaleX(0.9259);transform-origin:0 0;-webkit-text-stroke:0.3px #1b1b62;">Total nested cost</div>
<div class="t " style="left:1187.25px;top:687.49px;font-size:12.42px;line-height:12.42px;color:#1b1b62;transform:scaleX(0.9259);transform-origin:0 0;-webkit-text-stroke:0.3px #1b1b62;">:</div>
<div class="t " style="left:1207.5px;top:687.49px;font-size:12.42px;line-height:12.42px;color:#cc2020;transform:scaleX(0.9259);transform-origin:0 0;-webkit-text-stroke:0.3px #cc2020;">0.86</div>
<div class="t " style="left:1083.25px;top:703.99px;font-size:12.42px;line-height:12.42px;color:#1b1b62;transform:scaleX(0.9259);transform-origin:0 0;-webkit-text-stroke:0.3px #1b1b62;">Date</div>
<div class="t " style="left:1187.25px;top:704.49px;font-size:12.42px;line-height:12.42px;color:#1b1b62;transform:scaleX(0.9259);transform-origin:0 0;-webkit-text-stroke:0.3px #1b1b62;">:</div>
<div class="t " style="left:1207.5px;top:702.49px;font-size:12.42px;line-height:12.42px;color:#cc2020;transform:scaleX(0.9259);transform-origin:0 0;-webkit-text-stroke:0.3px #cc2020;">4/21/23</div>
<div class="t " style="left:863px;top:500.48px;font-size:13.61px;line-height:13.61px;color:#cc2020;transform:scaleX(0.9259);transform-origin:0 0;-webkit-text-stroke:0.25px #cc2020;">1) 1301-0521 (2)</div>
<div class="t " style="left:1085px;top:500.48px;font-size:13.61px;line-height:13.61px;color:#cc2020;transform:scaleX(0.9259);transform-origin:0 0;-webkit-text-stroke:0.25px #cc2020;">2) 1301-0531 (2)</div>
<div class="t " style="left:863px;top:979.48px;font-size:13.61px;line-height:13.61px;color:#cc2020;transform:scaleX(0.9259);transform-origin:0 0;-webkit-text-stroke:0.25px #cc2020;">1) 1301-0331 (2)</div>
<div class="t " style="left:1085px;top:979.48px;font-size:13.61px;line-height:13.61px;color:#cc2020;transform:scaleX(0.9259);transform-origin:0 0;-webkit-text-stroke:0.25px #cc2020;">2) 1301-0381 (6)</div>
<div class="t " style="left:863px;top:1008.48px;font-size:13.61px;line-height:13.61px;color:#cc2020;transform:scaleX(0.9259);transform-origin:0 0;-webkit-text-stroke:0.25px #cc2020;">3) 1301-0391</div>
<svg class="r" style="left:0;top:0" width="1920" height="1080" viewBox="0 0 1920 1080"><line x1="883" y1="252" x2="883" y2="273" stroke="#7de07d" stroke-width="1"/><line x1="1307" y1="252" x2="1307" y2="273" stroke="#7de07d" stroke-width="1"/><line x1="883" y1="257" x2="1068" y2="257" stroke="#7de07d" stroke-width="1.3"/><line x1="1122" y1="257" x2="1307" y2="257" stroke="#7de07d" stroke-width="1.3"/><path d="M883 257 L889 255 L889 259 Z" fill="#7de07d"/><path d="M1307 257 L1301 255 L1301 259 Z" fill="#7de07d"/><text x="1095" y="259.5" font-family="Liberation Mono" font-size="7.5" fill="#7de07d" text-anchor="middle">39.3701in</text><line x1="861" y1="273" x2="883" y2="273" stroke="#7de07d" stroke-width="1"/><line x1="861" y1="485" x2="883" y2="485" stroke="#7de07d" stroke-width="1"/><line x1="867" y1="273" x2="867" y2="357.0" stroke="#7de07d" stroke-width="1.3"/><line x1="867" y1="401.0" x2="867" y2="485" stroke="#7de07d" stroke-width="1.3"/><path d="M867 273 L865 279 L869 279 Z" fill="#7de07d"/><path d="M867 485 L865 479 L869 479 Z" fill="#7de07d"/><text x="869.5" y="379.0" transform="rotate(-90 869.5 379.0)" font-family="Liberation Mono" font-size="7.5" fill="#7de07d" text-anchor="middle">19.685in</text><rect x="883" y="273" width="424" height="212" fill="none" stroke="#9090dc" stroke-width="1.6"/><line x1="959" y1="273" x2="959" y2="494" stroke="#a8eef6" stroke-width="1.2"/><line x1="883" y1="485" x2="883" y2="494" stroke="#7de07d" stroke-width="1"/><line x1="1307" y1="485" x2="1307" y2="494" stroke="#7de07d" stroke-width="1"/><line x1="883" y1="490" x2="893" y2="490" stroke="#7de07d" stroke-width="1.3"/><line x1="949" y1="490" x2="959" y2="490" stroke="#7de07d" stroke-width="1.3"/><line x1="959" y1="490" x2="1105" y2="490" stroke="#7de07d" stroke-width="1.3"/><line x1="1161" y1="490" x2="1307" y2="490" stroke="#7de07d" stroke-width="1.3"/><path d="M883 490 L889 488 L889 492 Z" fill="#7de07d"/><path d="M959 490 L953 488 L953 492 Z" fill="#7de07d"/><path d="M959 490 L965 488 L965 492 Z" fill="#7de07d"/><path d="M1307 490 L1301 488 L1301 492 Z" fill="#7de07d"/><text x="921" y="492.5" font-family="Liberation Mono" font-size="7.5" fill="#7de07d" text-anchor="middle">7.05709in</text><text x="1133" y="492.5" font-family="Liberation Mono" font-size="7.5" fill="#7de07d" text-anchor="middle">32.313in</text><line x1="883" y1="731" x2="883" y2="752" stroke="#7de07d" stroke-width="1"/><line x1="1307" y1="731" x2="1307" y2="752" stroke="#7de07d" stroke-width="1"/><line x1="883" y1="736" x2="1068" y2="736" stroke="#7de07d" stroke-width="1.3"/><line x1="1122" y1="736" x2="1307" y2="736" stroke="#7de07d" stroke-width="1.3"/><path d="M883 736 L889 734 L889 738 Z" fill="#7de07d"/><path d="M1307 736 L1301 734 L1301 738 Z" fill="#7de07d"/><text x="1095" y="738.5" font-family="Liberation Mono" font-size="7.5" fill="#7de07d" text-anchor="middle">39.3701in</text><line x1="861" y1="752" x2="883" y2="752" stroke="#7de07d" stroke-width="1"/><line x1="861" y1="964" x2="883" y2="964" stroke="#7de07d" stroke-width="1"/><line x1="867" y1="752" x2="867" y2="836.0" stroke="#7de07d" stroke-width="1.3"/><line x1="867" y1="880.0" x2="867" y2="964" stroke="#7de07d" stroke-width="1.3"/><path d="M867 752 L865 758 L869 758 Z" fill="#7de07d"/><path d="M867 964 L865 958 L869 958 Z" fill="#7de07d"/><text x="869.5" y="858.0" transform="rotate(-90 869.5 858.0)" font-family="Liberation Mono" font-size="7.5" fill="#7de07d" text-anchor="middle">19.685in</text><rect x="883" y="752" width="424" height="212" fill="none" stroke="#9090dc" stroke-width="1.6"/><line x1="1247" y1="752" x2="1247" y2="973" stroke="#a8eef6" stroke-width="1.2"/><line x1="883" y1="964" x2="883" y2="973" stroke="#7de07d" stroke-width="1"/><line x1="1307" y1="964" x2="1307" y2="973" stroke="#7de07d" stroke-width="1"/><line x1="883" y1="969" x2="1037" y2="969" stroke="#7de07d" stroke-width="1.3"/><line x1="1093" y1="969" x2="1247" y2="969" stroke="#7de07d" stroke-width="1.3"/><line x1="1247" y1="969" x2="1249" y2="969" stroke="#7de07d" stroke-width="1.3"/><line x1="1305" y1="969" x2="1307" y2="969" stroke="#7de07d" stroke-width="1.3"/><path d="M883 969 L889 967 L889 971 Z" fill="#7de07d"/><path d="M1247 969 L1241 967 L1241 971 Z" fill="#7de07d"/><path d="M1247 969 L1253 967 L1253 971 Z" fill="#7de07d"/><path d="M1307 969 L1301 967 L1301 971 Z" fill="#7de07d"/><text x="1065" y="971.5" font-family="Liberation Mono" font-size="7.5" fill="#7de07d" text-anchor="middle">33.75in</text><text x="1277" y="971.5" font-family="Liberation Mono" font-size="7.5" fill="#7de07d" text-anchor="middle">5.62008in</text><path d="M887.8 289.7 L911.1 289.7 L911.1 319.9 L900.4 319.9 L900.4 325.7 L911.1 325.7 L911.1 348 L887.8 348 Q896 319 887.8 289.7 Z" fill="#7a8a22"/><path d="M916 314.6 L938.7 314.6 L938.7 344.2 L928.6 344.2 L928.6 350 L938.7 350 L938.7 372.4 L916 372.4 Q924 344 916 314.6 Z" fill="#7a8a22"/><path d="M890.5 351.5 Q894 351 895.7 355.4 Q898 364 904.7 373.5 Q910 379 915.1 380 Q922 382 925.5 383.9 Q931 387 929.4 392 Q929 400 922.9 407.2 L915.1 417.6 Q909 428 906.7 438.3 L905.4 450 L900.9 450 L900.9 455.2 L890.2 455.2 L890.2 402 L887.9 402 L887.9 386.5 L890.2 386.5 Z" fill="#7a8a22"/><path d="M937.2 378.7 L941.7 378.7 L941.7 376.1 L951.4 376.1 L951.4 429.3 L954.6 429.3 L954.6 444.8 L951.4 444.8 L951.4 479.8 Q948 480 947.5 478.5 Q945 472 938.4 459.1 Q933 451 928.1 448.7 Q920 446 916.4 443.5 Q911 439 911.9 435.7 Q912 430 913.8 428 L921.6 420.2 L928.1 412.4 Q932 407 933.3 402 Q935 396 935.2 390.4 Z" fill="#7a8a22"/><circle cx="917.4" cy="394.3" r="5.6" fill="#fff"/><circle cx="910.3" cy="407" r="2.6" fill="#fff"/><circle cx="932" cy="424.5" r="2.6" fill="#fff"/><circle cx="924.4" cy="437.3" r="5.8" fill="#fff"/><path d="M887.8 785.5 Q960 762 1044 764.7 L1044 789 Q1044 791.3 1040.7 791.3 Q960 786 894.3 803 Z" fill="#7a1a5a"/><path d="M887.8 816.3 Q960 792.8 1044 795.5 L1044 819.8 Q1044 822.0999999999999 1040.7 822.0999999999999 Q960 816.8 894.3 833.8 Z" fill="#7a1a5a"/><path d="M887.8 847.1 Q960 823.6 1044 826.3000000000001 L1044 850.6 Q1044 852.9 1040.7 852.9 Q960 847.6 894.3 864.6 Z" fill="#7a1a5a"/><path d="M918.5 876.7 Q990 857 1074 857.2 L1074 881 Q1074 883.6 1071 883.6 Q990 880 924.6 895.1 Z" fill="#7a1a5a"/><path d="M1077.8 865.9 Q1150 846 1233.5 845.6 L1233.5 870 Q1233.5 872.2 1231 872.2 Q1150 867 1084 882.6 Z" fill="#7a1a5a"/><path d="M1048.8 786.7 Q1120 793 1187 781 Q1191 780.5 1193 784 L1199.2 796.4 Q1130 818 1048.8 811.3 Z" fill="#7a1a5a"/><path d="M1048.8 821 Q1130 826 1191 809.6 Q1195 809 1197 812 L1202.7 826.3 Q1140 848 1048.8 845.6 Z" fill="#7a1a5a"/><path d="M888.8 893.7 Q980 926 1051 931 Q1100 929 1126 921.8 Q1130 921 1131.5 924 L1136.7 939.7 Q1080 956 985 958.3 L915 958.3 Q911 958 909 954 Z" fill="#7a1a5a"/><path d="M993.6 905.2 Q1080 886 1210 886 Q1216 886 1219 891 L1240.5 951.1 Q1180 930 1145.5 923 Q1080 910 1040 915 L999.3 922.4 Z" fill="#7a1a5a"/><circle cx="900.7" cy="790.6" r="4.8" fill="#fff"/><circle cx="937" cy="780.3" r="5.8" fill="#fff"/><circle cx="974.6" cy="775.1" r="6.5" fill="#fff"/><circle cx="1012.2" cy="774.4" r="7.1" fill="#fff"/><circle cx="900.7" cy="821.4" r="4.8" fill="#fff"/><circle cx="937" cy="811.0999999999999" r="5.8" fill="#fff"/><circle cx="974.6" cy="805.9" r="6.5" fill="#fff"/><circle cx="1012.2" cy="805.1999999999999" r="7.1" fill="#fff"/><circle cx="900.7" cy="852.2" r="4.8" fill="#fff"/><circle cx="937" cy="841.9" r="5.8" fill="#fff"/><circle cx="974.6" cy="836.7" r="6.5" fill="#fff"/><circle cx="1012.2" cy="836.0" r="7.1" fill="#fff"/><circle cx="931.3" cy="883" r="5" fill="#fff"/><circle cx="967.1" cy="872.2" r="5.8" fill="#fff"/><circle cx="1004.5" cy="867" r="6.5" fill="#fff"/><circle cx="1042.4" cy="866.4" r="7" fill="#fff"/><circle cx="1090.7" cy="871.7" r="5" fill="#fff"/><circle cx="1127" cy="861.1" r="5.8" fill="#fff"/><circle cx="1164.2" cy="855.6" r="6.5" fill="#fff"/><circle cx="1201.8" cy="855.6" r="7" fill="#fff"/><circle cx="1112.1" cy="803.1" r="6.3" fill="#fff"/><circle cx="1149.4" cy="799.9" r="5.8" fill="#fff"/><circle cx="1186" cy="792" r="5" fill="#fff"/><circle cx="1071.7" cy="812.2" r="2.6" fill="#fff"/><circle cx="1079" cy="836.5" r="7" fill="#fff"/><circle cx="1116.9" cy="836.5" r="6.5" fill="#fff"/><circle cx="1154" cy="831.2" r="5.8" fill="#fff"/><circle cx="1190" cy="820.7" r="5.3" fill="#fff"/></svg>
<div class="t " style="left:1453.2px;top:57.18px;font-size:11.13px;line-height:11.13px;color:#555;transform:scaleX(0.9434);transform-origin:0 0;">?</div>
<div class="t " style="left:6.2px;top:2.93px;font-size:14.50px;line-height:14.50px;color:#fffbe8;font-family:'Liberation Serif';font-weight:bold">I</div>
<div class="t " style="left:625px;top:1.11px;font-size:17.00px;line-height:17.00px;color:#a4a4a4;font-family:'Liberation Serif';font-style:italic">fx</div>
<div class="r" style="left:1767px;top:1px;width:1px;height:17px;background:#c4c4c4"></div>
<div class="t " style="left:1781.3px;top:4.43px;font-size:12.72px;line-height:12.72px;color:#1e5fc0;transform:scaleX(0.9434);transform-origin:0 0;font-weight:bold">?</div>
<div class="t " style="left:1842px;top:218.33px;font-size:14.50px;line-height:14.50px;color:#262b33;font-weight:bold;transform:scaleX(0.78);transform-origin:0 0">FRONT</div>
<svg class="r" style="left:0;top:0" width="1920" height="1080" viewBox="0 0 1920 1080"><path d="M64.2 172.1 L68.4 176.6 L72.60000000000001 172.1" fill="none" stroke="#222" stroke-width="1.6"/><rect x="80" y="170.3" width="5.8" height="6" fill="#62a8e6"/><rect x="83.5" y="170.3" width="2.3" height="2.5" fill="#3f7fb8"/><path d="M84.3 172.6 L87.4 175.6 L85.6 177.6" fill="none" stroke="#235f8a" stroke-width="1.5"/><path d="M105.2 191.47 A2.8 2.8 0 0 1 109.6 188.47" fill="none" stroke="#d23a3a" stroke-width="1.4"/><path d="M110.8 190.27 A2.8 2.8 0 0 1 106.4 193.27" fill="none" stroke="#2f8f6a" stroke-width="1.4"/><path d="M118.6 185.87 L129.1 185.87 Q132.6 190.37 129.1 195.37 L118.6 195.37 Z" fill="#fbfbfb" stroke="#9a9a9a" stroke-width="1"/><circle cx="125.39999999999999" cy="190.57" r="2.2" fill="none" stroke="#8a8a8a" stroke-width="1"/><path d="M64.2 205.64 L68.4 210.14 L72.60000000000001 205.64" fill="none" stroke="#222" stroke-width="1.6"/><rect x="80" y="203.84" width="5.8" height="6" fill="#62a8e6"/><rect x="83.5" y="203.84" width="2.3" height="2.5" fill="#3f7fb8"/><path d="M84.3 206.14 L87.4 209.14 L85.6 211.14" fill="none" stroke="#235f8a" stroke-width="1.5"/><path d="M105.2 225.01 A2.8 2.8 0 0 1 109.6 222.01" fill="none" stroke="#d23a3a" stroke-width="1.4"/><path d="M110.8 223.81 A2.8 2.8 0 0 1 106.4 226.81" fill="none" stroke="#2f8f6a" stroke-width="1.4"/><path d="M118.6 219.41 L129.1 219.41 Q132.6 223.91 129.1 228.91 L118.6 228.91 Z" fill="#fbfbfb" stroke="#9a9a9a" stroke-width="1"/><circle cx="125.39999999999999" cy="224.10999999999999" r="2.2" fill="none" stroke="#8a8a8a" stroke-width="1"/><path d="M64.2 239.17999999999998 L68.4 243.67999999999998 L72.60000000000001 239.17999999999998" fill="none" stroke="#222" stroke-width="1.6"/><rect x="80" y="237.38" width="5.8" height="6" fill="#62a8e6"/><rect x="83.5" y="237.38" width="2.3" height="2.5" fill="#3f7fb8"/><path d="M84.3 239.67999999999998 L87.4 242.67999999999998 L85.6 244.67999999999998" fill="none" stroke="#235f8a" stroke-width="1.5"/><path d="M105.2 258.54999999999995 A2.8 2.8 0 0 1 109.6 255.54999999999993" fill="none" stroke="#d23a3a" stroke-width="1.4"/><path d="M110.8 257.3499999999999 A2.8 2.8 0 0 1 106.4 260.3499999999999" fill="none" stroke="#2f8f6a" stroke-width="1.4"/><path d="M118.6 252.94999999999996 L129.1 252.94999999999996 Q132.6 257.44999999999993 129.1 262.44999999999993 L118.6 262.44999999999993 Z" fill="#fbfbfb" stroke="#9a9a9a" stroke-width="1"/><circle cx="125.39999999999999" cy="257.65" r="2.2" fill="none" stroke="#8a8a8a" stroke-width="1"/><path d="M64.2 272.72 L68.4 277.22 L72.60000000000001 272.72" fill="none" stroke="#222" stroke-width="1.6"/><rect x="80" y="270.92" width="5.8" height="6" fill="#62a8e6"/><rect x="83.5" y="270.92" width="2.3" height="2.5" fill="#3f7fb8"/><path d="M84.3 273.22 L87.4 276.22 L85.6 278.22" fill="none" stroke="#235f8a" stroke-width="1.5"/><path d="M105.2 292.09000000000003 A2.8 2.8 0 0 1 109.6 289.09000000000003" fill="none" stroke="#d23a3a" stroke-width="1.4"/><path d="M110.8 290.89 A2.8 2.8 0 0 1 106.4 293.89" fill="none" stroke="#2f8f6a" stroke-width="1.4"/><path d="M118.6 286.49 L129.1 286.49 Q132.6 290.99 129.1 295.99 L118.6 295.99 Z" fill="#fbfbfb" stroke="#9a9a9a" stroke-width="1"/><circle cx="125.39999999999999" cy="291.19" r="2.2" fill="none" stroke="#8a8a8a" stroke-width="1"/><path d="M64.2 306.26 L68.4 310.76 L72.60000000000001 306.26" fill="none" stroke="#222" stroke-width="1.6"/><rect x="80" y="304.46" width="5.8" height="6" fill="#62a8e6"/><rect x="83.5" y="304.46" width="2.3" height="2.5" fill="#3f7fb8"/><path d="M84.3 306.76 L87.4 309.76 L85.6 311.76" fill="none" stroke="#235f8a" stroke-width="1.5"/><path d="M105.2 325.63 A2.8 2.8 0 0 1 109.6 322.63" fill="none" stroke="#d23a3a" stroke-width="1.4"/><path d="M110.8 324.42999999999995 A2.8 2.8 0 0 1 106.4 327.42999999999995" fill="none" stroke="#2f8f6a" stroke-width="1.4"/><path d="M118.6 320.03 L129.1 320.03 Q132.6 324.53 129.1 329.53 L118.6 329.53 Z" fill="#fbfbfb" stroke="#9a9a9a" stroke-width="1"/><circle cx="125.39999999999999" cy="324.72999999999996" r="2.2" fill="none" stroke="#8a8a8a" stroke-width="1"/><path d="M64.2 339.8 L68.4 344.3 L72.60000000000001 339.8" fill="none" stroke="#222" stroke-width="1.6"/><rect x="80.5" y="337.7" width="7" height="7" fill="#e0e0e0" stroke="#999" stroke-width="0.8"/><path d="M82.5 339.7 L85.5 342.7" stroke="#555" stroke-width="1"/><path d="M105.2 359.17 A2.8 2.8 0 0 1 109.6 356.17" fill="none" stroke="#d23a3a" stroke-width="1.4"/><path d="M110.8 357.96999999999997 A2.8 2.8 0 0 1 106.4 360.96999999999997" fill="none" stroke="#2f8f6a" stroke-width="1.4"/><path d="M118.6 353.57 L129.1 353.57 Q132.6 358.07 129.1 363.07 L118.6 363.07 Z" fill="#fbfbfb" stroke="#9a9a9a" stroke-width="1"/><circle cx="125.39999999999999" cy="358.27" r="2.2" fill="none" stroke="#8a8a8a" stroke-width="1"/><path d="M64.2 373.34000000000003 L68.4 377.84000000000003 L72.60000000000001 373.34000000000003" fill="none" stroke="#222" stroke-width="1.6"/><rect x="80" y="371.54" width="5.8" height="6" fill="#62a8e6"/><rect x="83.5" y="371.54" width="2.3" height="2.5" fill="#3f7fb8"/><path d="M84.3 373.84000000000003 L87.4 376.84000000000003 L85.6 378.84000000000003" fill="none" stroke="#235f8a" stroke-width="1.5"/><path d="M105.2 392.71000000000004 A2.8 2.8 0 0 1 109.6 389.71000000000004" fill="none" stroke="#d23a3a" stroke-width="1.4"/><path d="M110.8 391.51 A2.8 2.8 0 0 1 106.4 394.51" fill="none" stroke="#2f8f6a" stroke-width="1.4"/><path d="M118.6 387.11 L129.1 387.11 Q132.6 391.61 129.1 396.61 L118.6 396.61 Z" fill="#fbfbfb" stroke="#9a9a9a" stroke-width="1"/><circle cx="125.39999999999999" cy="391.81" r="2.2" fill="none" stroke="#8a8a8a" stroke-width="1"/><path d="M64.2 406.88 L68.4 411.38 L72.60000000000001 406.88" fill="none" stroke="#222" stroke-width="1.6"/><rect x="80" y="405.08" width="5.8" height="6" fill="#62a8e6"/><rect x="83.5" y="405.08" width="2.3" height="2.5" fill="#3f7fb8"/><path d="M84.3 407.38 L87.4 410.38 L85.6 412.38" fill="none" stroke="#235f8a" stroke-width="1.5"/><path d="M105.2 426.25 A2.8 2.8 0 0 1 109.6 423.25" fill="none" stroke="#d23a3a" stroke-width="1.4"/><path d="M110.8 425.04999999999995 A2.8 2.8 0 0 1 106.4 428.04999999999995" fill="none" stroke="#2f8f6a" stroke-width="1.4"/><path d="M118.6 420.65 L129.1 420.65 Q132.6 425.15 129.1 430.15 L118.6 430.15 Z" fill="#fbfbfb" stroke="#9a9a9a" stroke-width="1"/><circle cx="125.39999999999999" cy="425.34999999999997" r="2.2" fill="none" stroke="#8a8a8a" stroke-width="1"/><path d="M64.2 440.42 L68.4 444.92 L72.60000000000001 440.42" fill="none" stroke="#222" stroke-width="1.6"/><rect x="80" y="438.62" width="5.8" height="6" fill="#62a8e6"/><rect x="83.5" y="438.62" width="2.3" height="2.5" fill="#3f7fb8"/><path d="M84.3 440.92 L87.4 443.92 L85.6 445.92" fill="none" stroke="#235f8a" stroke-width="1.5"/><path d="M105.2 459.79 A2.8 2.8 0 0 1 109.6 456.79" fill="none" stroke="#d23a3a" stroke-width="1.4"/><path d="M110.8 458.59 A2.8 2.8 0 0 1 106.4 461.59" fill="none" stroke="#2f8f6a" stroke-width="1.4"/><path d="M118.6 454.19 L129.1 454.19 Q132.6 458.69 129.1 463.69 L118.6 463.69 Z" fill="#fbfbfb" stroke="#9a9a9a" stroke-width="1"/><circle cx="125.39999999999999" cy="458.89" r="2.2" fill="none" stroke="#8a8a8a" stroke-width="1"/><path d="M64.2 473.96000000000004 L68.4 478.46000000000004 L72.60000000000001 473.96000000000004" fill="none" stroke="#222" stroke-width="1.6"/><rect x="80" y="472.16" width="5.8" height="6" fill="#62a8e6"/><rect x="83.5" y="472.16" width="2.3" height="2.5" fill="#3f7fb8"/><path d="M84.3 474.46000000000004 L87.4 477.46000000000004 L85.6 479.46000000000004" fill="none" stroke="#235f8a" stroke-width="1.5"/><path d="M105.2 493.33000000000004 A2.8 2.8 0 0 1 109.6 490.33000000000004" fill="none" stroke="#d23a3a" stroke-width="1.4"/><path d="M110.8 492.13 A2.8 2.8 0 0 1 106.4 495.13" fill="none" stroke="#2f8f6a" stroke-width="1.4"/><path d="M118.6 487.73 L129.1 487.73 Q132.6 492.23 129.1 497.23 L118.6 497.23 Z" fill="#fbfbfb" stroke="#9a9a9a" stroke-width="1"/><circle cx="125.39999999999999" cy="492.43" r="2.2" fill="none" stroke="#8a8a8a" stroke-width="1"/><path d="M64.2 507.5 L68.4 512.0 L72.60000000000001 507.5" fill="none" stroke="#222" stroke-width="1.6"/><rect x="80" y="505.7" width="5.8" height="6" fill="#62a8e6"/><rect x="83.5" y="505.7" width="2.3" height="2.5" fill="#3f7fb8"/><path d="M84.3 508.0 L87.4 511.0 L85.6 513.0" fill="none" stroke="#235f8a" stroke-width="1.5"/><path d="M105.2 526.87 A2.8 2.8 0 0 1 109.6 523.87" fill="none" stroke="#d23a3a" stroke-width="1.4"/><path d="M110.8 525.67 A2.8 2.8 0 0 1 106.4 528.67" fill="none" stroke="#2f8f6a" stroke-width="1.4"/><path d="M118.6 521.27 L129.1 521.27 Q132.6 525.77 129.1 530.77 L118.6 530.77 Z" fill="#fbfbfb" stroke="#9a9a9a" stroke-width="1"/><circle cx="125.39999999999999" cy="525.97" r="2.2" fill="none" stroke="#8a8a8a" stroke-width="1"/><path d="M64.2 541.0400000000001 L68.4 545.5400000000001 L72.60000000000001 541.0400000000001" fill="none" stroke="#222" stroke-width="1.6"/><rect x="80" y="539.24" width="5.8" height="6" fill="#62a8e6"/><rect x="83.5" y="539.24" width="2.3" height="2.5" fill="#3f7fb8"/><path d="M84.3 541.5400000000001 L87.4 544.5400000000001 L85.6 546.5400000000001" fill="none" stroke="#235f8a" stroke-width="1.5"/><path d="M105.2 560.4100000000001 A2.8 2.8 0 0 1 109.6 557.4100000000001" fill="none" stroke="#d23a3a" stroke-width="1.4"/><path d="M110.8 559.21 A2.8 2.8 0 0 1 106.4 562.21" fill="none" stroke="#2f8f6a" stroke-width="1.4"/><path d="M118.6 554.8100000000001 L129.1 554.8100000000001 Q132.6 559.3100000000001 129.1 564.3100000000001 L118.6 564.3100000000001 Z" fill="#fbfbfb" stroke="#9a9a9a" stroke-width="1"/><circle cx="125.39999999999999" cy="559.5100000000001" r="2.2" fill="none" stroke="#8a8a8a" stroke-width="1"/><path d="M64.2 574.58 L68.4 579.08 L72.60000000000001 574.58" fill="none" stroke="#222" stroke-width="1.6"/><path d="M83.9 572.48 L87.8 579.28 L80 579.28 Z" fill="#f2c21b"/><rect x="83.3" y="574.48" width="1.3" height="3" fill="#333"/><rect x="89.5" y="572.78" width="5.8" height="6" fill="#62a8e6"/><rect x="93.0" y="572.78" width="2.3" height="2.5" fill="#3f7fb8"/><path d="M93.8 575.08 L96.9 578.08 L95.1 580.08" fill="none" stroke="#235f8a" stroke-width="1.5"/><path d="M105.2 593.95 A2.8 2.8 0 0 1 109.6 590.95" fill="none" stroke="#d23a3a" stroke-width="1.4"/><path d="M110.8 592.75 A2.8 2.8 0 0 1 106.4 595.75" fill="none" stroke="#2f8f6a" stroke-width="1.4"/><path d="M118.6 588.35 L129.1 588.35 Q132.6 592.85 129.1 597.85 L118.6 597.85 Z" fill="#fbfbfb" stroke="#9a9a9a" stroke-width="1"/><circle cx="125.39999999999999" cy="593.0500000000001" r="2.2" fill="none" stroke="#8a8a8a" stroke-width="1"/><path d="M64.2 608.12 L68.4 612.62 L72.60000000000001 608.12" fill="none" stroke="#222" stroke-width="1.6"/><rect x="80" y="606.3199999999999" width="5.8" height="6" fill="#62a8e6"/><rect x="83.5" y="606.3199999999999" width="2.3" height="2.5" fill="#3f7fb8"/><path d="M84.3 608.62 L87.4 611.62 L85.6 613.62" fill="none" stroke="#235f8a" stroke-width="1.5"/><path d="M105.2 627.49 A2.8 2.8 0 0 1 109.6 624.49" fill="none" stroke="#d23a3a" stroke-width="1.4"/><path d="M110.8 626.29 A2.8 2.8 0 0 1 106.4 629.29" fill="none" stroke="#2f8f6a" stroke-width="1.4"/><path d="M118.6 621.89 L129.1 621.89 Q132.6 626.39 129.1 631.39 L118.6 631.39 Z" fill="#fbfbfb" stroke="#9a9a9a" stroke-width="1"/><circle cx="125.39999999999999" cy="626.59" r="2.2" fill="none" stroke="#8a8a8a" stroke-width="1"/><path d="M64.2 641.66 L68.4 646.16 L72.60000000000001 641.66" fill="none" stroke="#222" stroke-width="1.6"/><rect x="80" y="639.8599999999999" width="5.8" height="6" fill="#62a8e6"/><rect x="83.5" y="639.8599999999999" width="2.3" height="2.5" fill="#3f7fb8"/><path d="M84.3 642.16 L87.4 645.16 L85.6 647.16" fill="none" stroke="#235f8a" stroke-width="1.5"/><path d="M105.2 661.03 A2.8 2.8 0 0 1 109.6 658.03" fill="none" stroke="#d23a3a" stroke-width="1.4"/><path d="M110.8 659.8299999999999 A2.8 2.8 0 0 1 106.4 662.8299999999999" fill="none" stroke="#2f8f6a" stroke-width="1.4"/><path d="M118.6 655.43 L129.1 655.43 Q132.6 659.93 129.1 664.93 L118.6 664.93 Z" fill="#fbfbfb" stroke="#9a9a9a" stroke-width="1"/><circle cx="125.39999999999999" cy="660.13" r="2.2" fill="none" stroke="#8a8a8a" stroke-width="1"/><path d="M64.2 675.1999999999999 L68.4 679.6999999999999 L72.60000000000001 675.1999999999999" fill="none" stroke="#222" stroke-width="1.6"/><rect x="80" y="673.3999999999999" width="5.8" height="6" fill="#62a8e6"/><rect x="83.5" y="673.3999999999999" width="2.3" height="2.5" fill="#3f7fb8"/><path d="M84.3 675.6999999999999 L87.4 678.6999999999999 L85.6 680.6999999999999" fill="none" stroke="#235f8a" stroke-width="1.5"/><path d="M105.2 694.5699999999999 A2.8 2.8 0 0 1 109.6 691.5699999999999" fill="none" stroke="#d23a3a" stroke-width="1.4"/><path d="M110.8 693.3699999999999 A2.8 2.8 0 0 1 106.4 696.3699999999999" fill="none" stroke="#2f8f6a" stroke-width="1.4"/><path d="M118.6 688.9699999999999 L129.1 688.9699999999999 Q132.6 693.4699999999999 129.1 698.4699999999999 L118.6 698.4699999999999 Z" fill="#fbfbfb" stroke="#9a9a9a" stroke-width="1"/><circle cx="125.39999999999999" cy="693.67" r="2.2" fill="none" stroke="#8a8a8a" stroke-width="1"/><path d="M24 709.4 L28.2 713.9 L32.4 709.4" fill="none" stroke="#222" stroke-width="1.6"/><path d="M41 717.0 V704.5 H53 V712.5 M43.5 717.0 V707.0 H48 V712.5 M50.5 704.5 V712.5" fill="none" stroke="#9c9ca8" stroke-width="1.3"/><rect x="47" y="710.5" width="8.5" height="7.5" fill="#f5a623"/><rect x="49" y="713.0" width="4.5" height="1.5" fill="#f8c66a"/><path d="M44.4 726.0 L48.6 730.5 L52.8 726.0" fill="none" stroke="#222" stroke-width="1.6"/><path d="M63.9 725.0 L67.8 731.8 L60 731.8 Z" fill="#f2c21b"/><rect x="63.3" y="727.0" width="1.3" height="3" fill="#333"/><path d="M71.4 728.8000000000001 A2.8 2.8 0 0 1 75.8 725.8000000000001" fill="none" stroke="#d23a3a" stroke-width="1.4"/><path d="M77.0 727.6 A2.8 2.8 0 0 1 72.60000000000001 730.6" fill="none" stroke="#2f8f6a" stroke-width="1.4"/><path d="M80.9 724.4 L86.4 724.4 L87.9 725.9 L87.9 731.4 L86.4 732.4 L80.9 732.4 L79.9 730.9 L79.9 725.9 Z" fill="#e4e4e4" stroke="#b0b0b0" stroke-width="0.9"/><rect x="81.9" y="726.4" width="4" height="4" fill="none" stroke="#b8b8b8" stroke-width="0.8"/><rect x="82.0" y="737.12" width="12" height="14.5" rx="1" fill="#fafafa" stroke="#8c8c8c" stroke-width="1"/><rect x="84.0" y="739.12" width="8" height="1.6" fill="#555"/><path d="M84.0 742.62 H92.0 M84.0 745.62 H92.0 M84.0 748.62 H92.0 M87.0 741.62 V749.62" stroke="#b4b4b4" stroke-width="0.9"/><path d="M66.3 757.0400000000001 L70.8 761.0400000000001 L66.3 765.0400000000001" fill="none" stroke="#888" stroke-width="1.4"/><path d="M80.9 756.5400000000001 L86.4 756.5400000000001 L87.9 758.0400000000001 L87.9 763.5400000000001 L86.4 764.5400000000001 L80.9 764.5400000000001 L79.9 763.0400000000001 L79.9 758.0400000000001 Z" fill="#e4e4e4" stroke="#b0b0b0" stroke-width="0.9"/><rect x="81.9" y="758.5400000000001" width="4" height="4" fill="none" stroke="#b8b8b8" stroke-width="0.8"/><path d="M44.4 775.26 L48.6 779.76 L52.8 775.26" fill="none" stroke="#222" stroke-width="1.6"/><path d="M63.9 774.26 L67.8 781.06 L60 781.06 Z" fill="#f2c21b"/><rect x="63.3" y="776.26" width="1.3" height="3" fill="#333"/><path d="M71.4 778.0600000000001 A2.8 2.8 0 0 1 75.8 775.0600000000001" fill="none" stroke="#d23a3a" stroke-width="1.4"/><path d="M77.0 776.86 A2.8 2.8 0 0 1 72.60000000000001 779.86" fill="none" stroke="#2f8f6a" stroke-width="1.4"/><path d="M80.9 773.66 L86.4 773.66 L87.9 775.16 L87.9 780.66 L86.4 781.66 L80.9 781.66 L79.9 780.16 L79.9 775.16 Z" fill="#e4e4e4" stroke="#b0b0b0" stroke-width="0.9"/><rect x="81.9" y="775.66" width="4" height="4" fill="none" stroke="#b8b8b8" stroke-width="0.8"/><rect x="82.0" y="786.3800000000001" width="12" height="14.5" rx="1" fill="#fafafa" stroke="#8c8c8c" stroke-width="1"/><rect x="84.0" y="788.3800000000001" width="8" height="1.6" fill="#555"/><path d="M84.0 791.8800000000001 H92.0 M84.0 794.8800000000001 H92.0 M84.0 797.8800000000001 H92.0 M87.0 790.8800000000001 V798.8800000000001" stroke="#b4b4b4" stroke-width="0.9"/><path d="M66.3 806.3000000000001 L70.8 810.3000000000001 L66.3 814.3000000000001" fill="none" stroke="#888" stroke-width="1.4"/><path d="M80.9 805.8000000000001 L86.4 805.8000000000001 L87.9 807.3000000000001 L87.9 812.8000000000001 L86.4 813.8000000000001 L80.9 813.8000000000001 L79.9 812.3000000000001 L79.9 807.3000000000001 Z" fill="#e4e4e4" stroke="#b0b0b0" stroke-width="0.9"/><rect x="81.9" y="807.8000000000001" width="4" height="4" fill="none" stroke="#b8b8b8" stroke-width="0.8"/><path d="M44.4 824.52 L48.6 829.02 L52.8 824.52" fill="none" stroke="#222" stroke-width="1.6"/><path d="M61.400000000000006 827.32 A2.8 2.8 0 0 1 65.8 824.32" fill="none" stroke="#d23a3a" stroke-width="1.4"/><path d="M67.0 826.12 A2.8 2.8 0 0 1 62.6 829.12" fill="none" stroke="#2f8f6a" stroke-width="1.4"/><path d="M70.9 822.92 L76.4 822.92 L77.9 824.42 L77.9 829.92 L76.4 830.92 L70.9 830.92 L69.9 829.42 L69.9 824.42 Z" fill="#e4e4e4" stroke="#b0b0b0" stroke-width="0.9"/><rect x="71.9" y="824.92" width="4" height="4" fill="none" stroke="#b8b8b8" stroke-width="0.8"/><rect x="82.0" y="835.6400000000001" width="12" height="14.5" rx="1" fill="#fafafa" stroke="#8c8c8c" stroke-width="1"/><rect x="84.0" y="837.6400000000001" width="8" height="1.6" fill="#555"/><path d="M84.0 841.1400000000001 H92.0 M84.0 844.1400000000001 H92.0 M84.0 847.1400000000001 H92.0 M87.0 840.1400000000001 V848.1400000000001" stroke="#b4b4b4" stroke-width="0.9"/><path d="M66.3 855.5600000000001 L70.8 859.5600000000001 L66.3 863.5600000000001" fill="none" stroke="#888" stroke-width="1.4"/><path d="M80.9 855.0600000000001 L86.4 855.0600000000001 L87.9 856.5600000000001 L87.9 862.0600000000001 L86.4 863.0600000000001 L80.9 863.0600000000001 L79.9 861.5600000000001 L79.9 856.5600000000001 Z" fill="#e4e4e4" stroke="#b0b0b0" stroke-width="0.9"/><rect x="81.9" y="857.0600000000001" width="4" height="4" fill="none" stroke="#b8b8b8" stroke-width="0.8"/><path d="M44.4 873.78 L48.6 878.28 L52.8 873.78" fill="none" stroke="#222" stroke-width="1.6"/><path d="M61.400000000000006 876.58 A2.8 2.8 0 0 1 65.8 873.58" fill="none" stroke="#d23a3a" stroke-width="1.4"/><path d="M67.0 875.38 A2.8 2.8 0 0 1 62.6 878.38" fill="none" stroke="#2f8f6a" stroke-width="1.4"/><path d="M70.9 872.18 L76.4 872.18 L77.9 873.68 L77.9 879.18 L76.4 880.18 L70.9 880.18 L69.9 878.68 L69.9 873.68 Z" fill="#e4e4e4" stroke="#b0b0b0" stroke-width="0.9"/><rect x="71.9" y="874.18" width="4" height="4" fill="none" stroke="#b8b8b8" stroke-width="0.8"/><rect x="82.0" y="884.9000000000001" width="12" height="14.5" rx="1" fill="#fafafa" stroke="#8c8c8c" stroke-width="1"/><rect x="84.0" y="886.9000000000001" width="8" height="1.6" fill="#555"/><path d="M84.0 890.4000000000001 H92.0 M84.0 893.4000000000001 H92.0 M84.0 896.4000000000001 H92.0 M87.0 889.4000000000001 V897.4000000000001" stroke="#b4b4b4" stroke-width="0.9"/><path d="M66.3 904.82 L70.8 908.82 L66.3 912.82" fill="none" stroke="#888" stroke-width="1.4"/><path d="M80.9 904.32 L86.4 904.32 L87.9 905.82 L87.9 911.32 L86.4 912.32 L80.9 912.32 L79.9 910.82 L79.9 905.82 Z" fill="#e4e4e4" stroke="#b0b0b0" stroke-width="0.9"/><rect x="81.9" y="906.32" width="4" height="4" fill="none" stroke="#b8b8b8" stroke-width="0.8"/><path d="M44.4 923.04 L48.6 927.54 L52.8 923.04" fill="none" stroke="#222" stroke-width="1.6"/><path d="M61.400000000000006 925.84 A2.8 2.8 0 0 1 65.8 922.84" fill="none" stroke="#d23a3a" stroke-width="1.4"/><path d="M67.0 924.64 A2.8 2.8 0 0 1 62.6 927.64" fill="none" stroke="#2f8f6a" stroke-width="1.4"/><path d="M70.9 921.4399999999999 L76.4 921.4399999999999 L77.9 922.9399999999999 L77.9 928.4399999999999 L76.4 929.4399999999999 L70.9 929.4399999999999 L69.9 927.9399999999999 L69.9 922.9399999999999 Z" fill="#e4e4e4" stroke="#b0b0b0" stroke-width="0.9"/><rect x="71.9" y="923.4399999999999" width="4" height="4" fill="none" stroke="#b8b8b8" stroke-width="0.8"/><rect x="82.0" y="934.1600000000001" width="12" height="14.5" rx="1" fill="#fafafa" stroke="#8c8c8c" stroke-width="1"/><rect x="84.0" y="936.1600000000001" width="8" height="1.6" fill="#555"/><path d="M84.0 939.6600000000001 H92.0 M84.0 942.6600000000001 H92.0 M84.0 945.6600000000001 H92.0 M87.0 938.6600000000001 V946.6600000000001" stroke="#b4b4b4" stroke-width="0.9"/><path d="M66.3 954.08 L70.8 958.08 L66.3 962.08" fill="none" stroke="#888" stroke-width="1.4"/><path d="M80.9 953.58 L86.4 953.58 L87.9 955.08 L87.9 960.58 L86.4 961.58 L80.9 961.58 L79.9 960.08 L79.9 955.08 Z" fill="#e4e4e4" stroke="#b0b0b0" stroke-width="0.9"/><rect x="81.9" y="955.58" width="4" height="4" fill="none" stroke="#b8b8b8" stroke-width="0.8"/><path d="M44.4 972.3 L48.6 976.8 L52.8 972.3" fill="none" stroke="#222" stroke-width="1.6"/><path d="M63.9 971.3 L67.8 978.0999999999999 L60 978.0999999999999 Z" fill="#f2c21b"/><rect x="63.3" y="973.3" width="1.3" height="3" fill="#333"/><path d="M71.4 975.1 A2.8 2.8 0 0 1 75.8 972.1" fill="none" stroke="#d23a3a" stroke-width="1.4"/><path d="M77.0 973.9 A2.8 2.8 0 0 1 72.60000000000001 976.9" fill="none" stroke="#2f8f6a" stroke-width="1.4"/><path d="M80.9 970.6999999999999 L86.4 970.6999999999999 L87.9 972.1999999999999 L87.9 977.6999999999999 L86.4 978.6999999999999 L80.9 978.6999999999999 L79.9 977.1999999999999 L79.9 972.1999999999999 Z" fill="#e4e4e4" stroke="#b0b0b0" stroke-width="0.9"/><rect x="81.9" y="972.6999999999999" width="4" height="4" fill="none" stroke="#b8b8b8" stroke-width="0.8"/><rect x="82.0" y="983.4200000000001" width="12" height="14.5" rx="1" fill="#fafafa" stroke="#8c8c8c" stroke-width="1"/><rect x="84.0" y="985.4200000000001" width="8" height="1.6" fill="#555"/><path d="M84.0 988.9200000000001 H92.0 M84.0 991.9200000000001 H92.0 M84.0 994.9200000000001 H92.0 M87.0 987.9200000000001 V995.9200000000001" stroke="#b4b4b4" stroke-width="0.9"/><path d="M44.4 1005.1400000000001 L48.6 1009.6400000000001 L52.8 1005.1400000000001" fill="none" stroke="#222" stroke-width="1.6"/><path d="M61.400000000000006 1007.9400000000002 A2.8 2.8 0 0 1 65.8 1004.9400000000002" fill="none" stroke="#d23a3a" stroke-width="1.4"/><path d="M67.0 1006.7400000000001 A2.8 2.8 0 0 1 62.6 1009.7400000000001" fill="none" stroke="#2f8f6a" stroke-width="1.4"/><path d="M70.9 1003.5400000000001 L76.4 1003.5400000000001 L77.9 1005.0400000000001 L77.9 1010.5400000000001 L76.4 1011.5400000000001 L70.9 1011.5400000000001 L69.9 1010.0400000000001 L69.9 1005.0400000000001 Z" fill="#e4e4e4" stroke="#b0b0b0" stroke-width="0.9"/><rect x="71.9" y="1005.5400000000001" width="4" height="4" fill="none" stroke="#b8b8b8" stroke-width="0.8"/><rect x="82.0" y="1016.26" width="12" height="14.5" rx="1" fill="#fafafa" stroke="#8c8c8c" stroke-width="1"/><rect x="84.0" y="1018.26" width="8" height="1.6" fill="#555"/><path d="M84.0 1021.76 H92.0 M84.0 1024.76 H92.0 M84.0 1027.76 H92.0 M87.0 1020.76 V1028.76" stroke="#b4b4b4" stroke-width="0.9"/><path d="M66.3 1036.18 L70.8 1040.18 L66.3 1044.18" fill="none" stroke="#888" stroke-width="1.4"/><path d="M80.9 1035.68 L86.4 1035.68 L87.9 1037.18 L87.9 1042.68 L86.4 1043.68 L80.9 1043.68 L79.9 1042.18 L79.9 1037.18 Z" fill="#e4e4e4" stroke="#b0b0b0" stroke-width="0.9"/><rect x="81.9" y="1037.68" width="4" height="4" fill="none" stroke="#b8b8b8" stroke-width="0.8"/><path d="M296.8 178.5 L301 173.5 L305.2 178.5" fill="none" stroke="#333" stroke-width="2.2"/><path d="M296.8 1045.8 L301 1051.2 L305.2 1045.8" fill="none" stroke="#333" stroke-width="2.4"/><path d="M47 149 L55 157 M55 149 L47 157" stroke="#444" stroke-width="1.1"/><path d="M145 153.5 H155 M150 148.5 V158.5" stroke="#555" stroke-width="1.6"/><path d="M290 148.5 H304 M290 153.5 H304 M290 158.5 H304" stroke="#4a4a4a" stroke-width="2"/><path d="M10.5 52.5 H26 L34 60.5 V79.5 H10.5 Z" fill="#f4f4f4" stroke="#5a5a5a" stroke-width="1.3"/><path d="M25 52.5 L34 61.5 H25 Z" fill="#4a4a4a"/><path d="M15 76 V63.5 H23.5 V70" fill="none" stroke="#555" stroke-width="3"/><path d="M27 70.5 H38.5 V75" fill="none" stroke="#1f7ed4" stroke-width="2.2"/><path d="M33 75 H43.5 L38.3 83.5 Z" fill="#1f7ed4"/><path d="M78 76 V53.5 H97.5 V66 M82.5 76 V58 H93 V69 M86 76 V61 H90 V71 M78 76 H82.5 M100 66 V53.5 H104 V66" fill="none" stroke="#666" stroke-width="1.3"/><rect x="96" y="65.5" width="12.5" height="17.5" rx="1" fill="#fafafa" stroke="#666" stroke-width="1.2"/><rect x="98" y="67.5" width="8.5" height="5.5" fill="#2a8ae0"/><path d="M98 76 H106 M98 79.5 H106" stroke="#555" stroke-width="0.9"/><path d="M178.5 81.5 V58.3 H194 M178.5 81.5 H183.3 V63.3 H192 V74 H197.7 V68.7 M185.7 81.5 V65.7 H190.3 V76.3 H199.3 V72.3 M185.7 81.5 H204.7 V68" fill="none" stroke="#5a5a5a" stroke-width="1.3"/><polygon points="199.70,54.10 200.96,59.25 205.50,56.50 202.75,61.04 207.90,62.30 202.75,63.56 205.50,68.10 200.96,65.35 199.70,70.50 198.44,65.35 193.90,68.10 196.65,63.56 191.50,62.30 196.65,61.04 193.90,56.50 198.44,59.25" fill="#f5a500"/><path d="M248.5 77.19999999999999 V54.3 H267.4 V67.39999999999999 M248.5 77.19999999999999 H253.5 V59.3 H262.4 V70.2 H265.0 M255.5 77.19999999999999 V61.099999999999994 H260.6 V72.19999999999999 H263.0 M255.5 77.19999999999999 H262.0 M269.6 67.39999999999999 V54.3 H274.6 V68.89999999999999" fill="none" stroke="#c4c4c4" stroke-width="1.3"/><path d="M265 80.5 L275.5 70 L278 72.5 L267.5 83 L264 84 Z" fill="#cfcfcf"/><path d="M294.2 76.19999999999999 V53.3 H313.09999999999997 V66.39999999999999 M294.2 76.19999999999999 H299.2 V58.3 H308.09999999999997 V69.2 H310.7 M301.2 76.19999999999999 V60.099999999999994 H306.3 V71.19999999999999 H308.7 M301.2 76.19999999999999 H307.7 M315.3 66.39999999999999 V53.3 H320.3 V67.89999999999999" fill="none" stroke="#c4c4c4" stroke-width="1.3"/><rect x="312" y="67.5" width="11.5" height="15" fill="#fafafa" stroke="#c8c8c8" stroke-width="1"/><rect x="313.5" y="69" width="8.5" height="3" fill="#cfcfcf"/><path d="M314 75 h1.5 M317 75 h1.5 M320 75 h1.5 M314 78 h1.5 M317 78 h1.5 M320 78 h1.5 M314 81 h1.5 M317 81 h1.5 M320 81 h1.5" stroke="#c4c4c4" stroke-width="1.5"/><path d="M350.9 79.3 V56.4 H369.79999999999995 V69.5 M350.9 79.3 H355.9 V61.4 H364.79999999999995 V72.3 H367.4 M357.9 79.3 V63.199999999999996 H363.0 V74.3 H365.4 M357.9 79.3 H364.4 M372.0 69.5 V56.4 H377.0 V71.0" fill="none" stroke="#555" stroke-width="1.3"/><path d="M378.5 52.5 L367.5 60.2 L373.2 60.2 L370.5 66.5 L381.8 58.8 L376 58.8 Z" fill="#f5a000"/><path d="M367.8 76.2 A6.8 6.8 0 0 1 379.90000000000003 73.7" fill="none" stroke="#25a04a" stroke-width="2.6"/><path d="M383.90000000000003 71.7 L382.40000000000003 78.2 L376.90000000000003 74.7 Z" fill="#25a04a"/><path d="M381.40000000000003 78.2 A6.8 6.8 0 0 1 369.3 80.7" fill="none" stroke="#25a04a" stroke-width="2.6"/><path d="M365.3 82.7 L366.8 76.2 L372.3 79.7 Z" fill="#25a04a"/><path d="M413.5 76.3 V53.4 H432.4 V66.5 M413.5 76.3 H418.5 V58.4 H427.4 V69.3 H430.0 M420.5 76.3 V60.199999999999996 H425.6 V71.3 H428.0 M420.5 76.3 H427.0 M434.6 66.5 V53.4 H439.6 V68.0" fill="none" stroke="#555" stroke-width="1.3"/><path d="M427.8 74 A6.8 6.8 0 0 1 439.90000000000003 71.5" fill="none" stroke="#25a04a" stroke-width="2.6"/><path d="M443.90000000000003 69.5 L442.40000000000003 76 L436.90000000000003 72.5 Z" fill="#25a04a"/><path d="M441.40000000000003 76 A6.8 6.8 0 0 1 429.3 78.5" fill="none" stroke="#25a04a" stroke-width="2.6"/><path d="M425.3 80.5 L426.8 74 L432.3 77.5 Z" fill="#25a04a"/><path d="M478.8 60.9 L486.2 52.4 H510.3 V76.4 L503.2 83.5 H478.8 Z" fill="#dcdcdc" stroke="#5c5c5c" stroke-width="1.3"/><path d="M479.5 61 L486.5 53 H509.8 L502.5 61 Z" fill="#f6f6f6"/><path d="M502.5 61 L509.8 53 V76 L502.5 83 Z" fill="#c2c2c2"/><defs><clipPath id="sph"><circle cx="557.3" cy="67" r="14"/></clipPath></defs><circle cx="557.3" cy="67" r="14" fill="#fafafa"/><g clip-path="url(#sph)"><rect x="542.05" y="51.75" width="6.1" height="6.1" fill="#4a4a4a"/><rect x="542.05" y="63.95" width="6.1" height="6.1" fill="#4a4a4a"/><rect x="542.05" y="76.15" width="6.1" height="6.1" fill="#4a4a4a"/><rect x="548.15" y="57.85" width="6.1" height="6.1" fill="#4a4a4a"/><rect x="548.15" y="70.05" width="6.1" height="6.1" fill="#4a4a4a"/><rect x="554.25" y="51.75" width="6.1" height="6.1" fill="#4a4a4a"/><rect x="554.25" y="63.95" width="6.1" height="6.1" fill="#4a4a4a"/><rect x="554.25" y="76.15" width="6.1" height="6.1" fill="#4a4a4a"/><rect x="560.35" y="57.85" width="6.1" height="6.1" fill="#4a4a4a"/><rect x="560.35" y="70.05" width="6.1" height="6.1" fill="#4a4a4a"/><rect x="566.45" y="51.75" width="6.1" height="6.1" fill="#4a4a4a"/><rect x="566.45" y="63.95" width="6.1" height="6.1" fill="#4a4a4a"/><rect x="566.45" y="76.15" width="6.1" height="6.1" fill="#4a4a4a"/></g><circle cx="557.3" cy="67" r="14.2" fill="none" stroke="#4a4a4a" stroke-width="1.4"/><rect x="558.5" y="68" width="18" height="17" fill="#f5f5f5"/><rect x="568.2" y="69" width="6.2" height="6.2" fill="#e8762a"/><rect x="559.7" y="77.2" width="6.2" height="6.4" fill="#e3202e"/><rect x="568.2" y="77.2" width="6.2" height="6.4" fill="#1e7fd8"/><rect x="561" y="70" width="5.5" height="5.5" fill="#4a4a4a"/><rect x="626.6" y="55.1" width="13.3" height="25.7" fill="#e49a5a"/><rect x="641" y="52" width="1.6" height="31.5" fill="#555"/><path d="M643 55.6 H656 V80.3 H643" fill="none" stroke="#e49a5a" stroke-width="1.2" stroke-dasharray="2.2 1.6"/><circle cx="711" cy="67.7" r="13.5" fill="#f2f2f2" stroke="#555" stroke-width="1.6"/><line x1="768.5" y1="76" x2="775.5" y2="83" stroke="#4a3f20" stroke-width="2.2"/><circle cx="758.2" cy="65.7" r="10.2" fill="#e6e6e6" stroke="#555" stroke-width="2"/><path d="M753 63 V60.5 H755.5 M761 60.5 H763.5 V63 M763.5 68.5 V71 H761 M755.5 71 H753 V68.5" fill="none" stroke="#555" stroke-width="1.2"/><path transform="translate(766.5 51.5) scale(1.05)" d="M9 0 L2 9 L6 9 L3 17 L12 6 L8 6 L12 0 Z" fill="#f5a000"/><rect x="806" y="53" width="22.5" height="25.5" fill="#f7f7f7" stroke="#c8c8c8" stroke-width="1"/><path d="M809 58 h7 M818 58 h7 M809 62 h7 M818 62 h7 M809 66 h7 M818 66 h7 M809 70 h7 M818 70 h7 M809 74 h7" stroke="#cdcdcd" stroke-width="1"/><path d="M819 75 H828 V71.5 L836 77.5 L828 83.5 V80 H819 Z" fill="#cccccc"/><path d="M880 54 H902 V80.5 H875.5 V59 Z" fill="#ececec" stroke="#cfcfcf" stroke-width="1"/><rect x="889" y="69" width="13.5" height="12" fill="#f5f5f5"/><path d="M890 81 V70 H901 V80 M893 81 V73 H898 V78" fill="none" stroke="#c4c4c4" stroke-width="1.6"/><path d="M972 77.5 V55 H980 L982.5 58 H998 V64" fill="none" stroke="#555" stroke-width="1.2"/><path d="M972 77.5 H987" fill="none" stroke="#555" stroke-width="1.2"/><defs><clipPath id="sph2"><circle cx="994.2" cy="71.5" r="7.8"/></clipPath></defs><circle cx="994.2" cy="71.5" r="7.8" fill="#fafafa"/><g clip-path="url(#sph2)"><rect x="986.20" y="63.50" width="3.2" height="3.2" fill="#4a4a4a"/><rect x="986.20" y="69.90" width="3.2" height="3.2" fill="#4a4a4a"/><rect x="986.20" y="76.30" width="3.2" height="3.2" fill="#4a4a4a"/><rect x="989.40" y="66.70" width="3.2" height="3.2" fill="#4a4a4a"/><rect x="989.40" y="73.10" width="3.2" height="3.2" fill="#4a4a4a"/><rect x="992.60" y="63.50" width="3.2" height="3.2" fill="#4a4a4a"/><rect x="992.60" y="69.90" width="3.2" height="3.2" fill="#4a4a4a"/><rect x="992.60" y="76.30" width="3.2" height="3.2" fill="#4a4a4a"/><rect x="995.80" y="66.70" width="3.2" height="3.2" fill="#4a4a4a"/><rect x="995.80" y="73.10" width="3.2" height="3.2" fill="#4a4a4a"/><rect x="999.00" y="63.50" width="3.2" height="3.2" fill="#4a4a4a"/><rect x="999.00" y="69.90" width="3.2" height="3.2" fill="#4a4a4a"/><rect x="999.00" y="76.30" width="3.2" height="3.2" fill="#4a4a4a"/></g><circle cx="994.2" cy="71.5" r="7.8" fill="none" stroke="#4a4a4a" stroke-width="1.2"/><rect x="1040.5" y="53.3" width="29.8" height="29" fill="#fafafa" stroke="#555" stroke-width="1.2"/><rect x="1040.5" y="53.3" width="29.8" height="4.5" fill="#4a4a4a"/><rect x="1042" y="54.5" width="2.5" height="2" fill="#fff"/><rect x="1045" y="63.2" width="2.4" height="2.4" fill="#1f7fd4"/><path d="M1049 64.4 H1066" stroke="#1f7fd4" stroke-width="1"/><rect x="1045" y="69.3" width="2.4" height="2.4" fill="#333"/><path d="M1049 70.5 H1066" stroke="#555" stroke-width="1"/><rect x="1045" y="75.1" width="2.4" height="2.4" fill="#333"/><path d="M1049 76.3 H1066" stroke="#555" stroke-width="1"/><rect x="1124" y="52.2" width="24.5" height="31" fill="#fafafa" stroke="#555" stroke-width="1.3"/><rect x="1127.5" y="54.7" width="16.5" height="12.6" fill="#5aaae8" stroke="#3a80c0" stroke-width="0.6"/><path d="M1128 72.1 H1144 M1128 78.8 H1144" stroke="#444" stroke-width="1"/><rect x="1132" y="70" width="1.6" height="4.5" fill="#333"/><rect x="1139" y="76.5" width="1.6" height="4.5" fill="#333"/><path d="M1202 55 H1214 Q1216 55 1215 58 L1211.5 59 L1214.5 66.8 H1202.5 L1199.5 59 Z" fill="none" stroke="#555" stroke-width="1.3"/><path d="M1204 58 H1212 M1204.5 61 H1211 M1205 64 H1212" stroke="#555" stroke-width="1"/><circle cx="1201.5" cy="65.5" r="1.6" fill="none" stroke="#555" stroke-width="1.1"/><path d="M1201.5 78 H1213 Q1215 78 1213.5 81 L1210 82 L1212 87 M1200 81 L1201.5 86 V92" fill="none" stroke="#555" stroke-width="1.3"/><path d="M1203 81 H1211" stroke="#555" stroke-width="1"/><circle cx="1201.5" cy="89.5" r="1.6" fill="none" stroke="#555" stroke-width="1.1"/><rect x="1208" y="86" width="8" height="2.6" fill="#3a90d8"/><rect x="1208" y="89.8" width="8" height="2.6" fill="#3a90d8"/><path d="M1207 100.8 H1212.5 L1209 107 H1211.5 L1201 117.2 L1204.5 109 H1201.5 Z" fill="#f5a000"/><polygon points="1314.50,53.30 1315.19,59.64 1320.16,55.64 1316.16,60.61 1322.50,61.30 1316.16,61.99 1320.16,66.96 1315.19,62.96 1314.50,69.30 1313.81,62.96 1308.84,66.96 1312.84,61.99 1306.50,61.30 1312.84,60.61 1308.84,55.64 1313.81,59.64" fill="#cfcfcf"/><rect x="1309" y="81" width="11" height="7.8" fill="#1d2a24"/><rect x="1310" y="82" width="2.4" height="5.8" fill="#3ab86a"/><circle cx="1456.8" cy="61.3" r="7.2" fill="#fafafa" stroke="#666" stroke-width="1.1"/><circle cx="1456.6" cy="85.2" r="7" fill="#2a86d8"/><rect x="1455.9" y="83.3" width="1.6" height="5.5" fill="#fff"/><rect x="1455.9" y="80.6" width="1.6" height="1.6" fill="#fff"/><path d="M491.5 106.5 L496.5 106.5 L494 109.5 Z" fill="#444"/><path d="M555.5 106.5 L560.5 106.5 L558 109.5 Z" fill="#444"/><path d="M639.5 106.5 L644.5 106.5 L642 109.5 Z" fill="#444"/><path d="M708.5 106.5 L713.5 106.5 L711 109.5 Z" fill="#444"/><path d="M1031.5 130 L1040.5 130 L1036 134.8 Z" fill="#333"/><rect x="0" y="0" width="21.5" height="21.5" fill="#8a6c0a"/><rect x="0" y="0" width="20" height="19.5" fill="#d9ab12"/><rect x="0" y="0" width="2.5" height="19.5" fill="#f0d060"/><path d="M31.5 5 H43 L46.5 8.5 V15.3 H31.5 Z" fill="#f7f7f7" stroke="#555" stroke-width="1.2"/><path d="M43 5 L46.5 8.5 H43 Z" fill="#555"/><path d="M54.7 8.3 L59.3 8.3 L57 11.1 Z" fill="#444"/><path d="M67.5 15 V4.5 H72 L73.5 6 H79 V8.5" fill="none" stroke="#555" stroke-width="1.2"/><path d="M67.5 15 L70.5 8.5 H82.5 L79.5 15 Z" fill="#f7f7f7" stroke="#555" stroke-width="1.2"/><rect x="92.2" y="3" width="13.8" height="13" fill="#555"/><rect x="95" y="3" width="8" height="4.5" fill="#f0f0f0"/><rect x="95" y="10.5" width="8" height="5.5" fill="#f0f0f0"/><rect x="96" y="12.5" width="1.5" height="1.5" fill="#555"/><path d="M115.5 9.5 L120 5.5 V8 H126 Q131 8.5 130.5 14" fill="none" stroke="#444" stroke-width="1.3"/><path d="M115.5 9.5 L120 13.5 V11 H125.5 Q128 11 128.5 13.5" fill="none" stroke="#444" stroke-width="1.3"/><path d="M138.7 8.3 L143.3 8.3 L141 11.1 Z" fill="#444"/><path d="M166 9.5 L161.5 5.5 V8 H155 Q151 8.5 151 13 M166 9.5 L161.5 13.5 V11 H156 Q153.5 11 153 13" fill="none" stroke="#b8b8b8" stroke-width="1.2"/><path d="M174.39999999999998 8.3 L179.0 8.3 L176.7 11.1 Z" fill="#999"/><path d="M187.8 10 L195 3 L202.2 10 M189.5 8.5 V16.5 H200.5 V8.5 M193.5 16.5 V12.5 H196.5 V16.5 M199 4 V6.5" fill="none" stroke="#444" stroke-width="1.5"/><path d="M212.5 11 V3 H217 L218.5 4.5 H222 V7 M215 15.5 V8.5 H220 L221.5 10 H225.5 V15.5 Z" fill="none" stroke="#a8a8a8" stroke-width="1.1"/><path d="M239 2 L235.5 10 H238.5 L236 16 L242 8 H239.5 L242 2 Z" fill="#b0b0b0"/><path d="M241.5 17 V10 H247.5 L250.5 13 V17 Z" fill="none" stroke="#a8a8a8" stroke-width="1.1"/><path d="M258.5 8.3 L263.1 8.3 L260.8 11.1 Z" fill="#333"/><rect x="271" y="1.5" width="8" height="14" rx="1.5" fill="#c4c4c4" stroke="#a8a8a8" stroke-width="0.8"/><path d="M281 9 L285.5 13.5 L283 14 L284 16.5" fill="none" stroke="#999" stroke-width="1.1"/><path d="M292.3 8.3 L296.90000000000003 8.3 L294.6 11.1 Z" fill="#333"/><circle cx="310" cy="6.5" r="3.8" fill="#e8e8e8" stroke="#aaa" stroke-width="1"/><path d="M307 12 Q308 14.5 310.5 14" fill="none" stroke="#444" stroke-width="1.2"/><rect x="314" y="10" width="7" height="6" fill="#c8c8c8"/><circle cx="338" cy="9.3" r="7" fill="none" stroke="#aaa" stroke-width="1.6"/><circle cx="338" cy="9.3" r="3" fill="#aaa"/><path d="M338 2.5 V16 M331.3 9.3 H344.7 M333.2 4.5 L342.8 14.1 M342.8 4.5 L333.2 14.1" stroke="#aaa" stroke-width="1.2"/><path d="M441 8.3 L447 8.3 L444 11.1 Z" fill="#333"/><rect x="450.2" y="0" width="24" height="20" fill="#d3d3d3"/><circle cx="461.9" cy="9.8" r="7.8" fill="#b4b4b4"/><path d="M564.9 8.3 L570.9 8.3 L567.9 11.1 Z" fill="#333"/><circle cx="585" cy="9" r="7" fill="#bcbcbc"/><rect x="588" y="13" width="7" height="1.5" fill="#a8a8a8"/><circle cx="609" cy="9" r="7" fill="#bcbcbc"/><path d="M612 12 L617 17 M617 12 L612 17" stroke="#a8a8a8" stroke-width="1.2"/><path d="M652.5 9.5 H664 M658.2 4 V15" stroke="#b0b0b0" stroke-width="3"/><rect x="674.5" y="2" width="6" height="6" fill="none" stroke="#aaa" stroke-width="1"/><rect x="682.5" y="2" width="6" height="6" fill="none" stroke="#aaa" stroke-width="1"/><rect x="674.5" y="10" width="6" height="6" fill="none" stroke="#aaa" stroke-width="1"/><rect x="682" y="10" width="8" height="7" fill="#c4c4c4"/><rect x="697.5" y="6" width="9" height="1.3" fill="#444"/><path d="M697.5 8.5 H706.5 L702 12.5 Z" fill="#444"/><path d="M1428 6 L1431 9.5 L1428 13 Z" fill="#444"/><circle cx="1628" cy="7" r="4.3" fill="#4c8ee0" stroke="#1f3f7a" stroke-width="1"/><path d="M1620.5 17.5 Q1621 11.5 1628 11.5 Q1635 11.5 1635.5 17.5 Z" fill="#4c8ee0" stroke="#1f3f7a" stroke-width="1"/><path d="M1727 8.3 L1731 8.3 L1729 11.1 Z" fill="#555"/><path d="M1742 3.5 H1745 L1747.5 12.5 H1756 L1758 6 H1746" fill="none" stroke="#5a7aa0" stroke-width="1.4"/><circle cx="1748.5" cy="15.3" r="1.4" fill="none" stroke="#5a7aa0" stroke-width="1.1"/><circle cx="1755" cy="15.3" r="1.4" fill="none" stroke="#5a7aa0" stroke-width="1.1"/><circle cx="1785" cy="9.6" r="7.6" fill="#fafafa" stroke="#1e3570" stroke-width="1.3"/><path d="M1800.5 8.3 L1804.5 8.3 L1802.5 11.1 Z" fill="#666"/><rect x="1856.5" y="13.2" width="9" height="2.2" fill="#222"/><path d="M1879.5 8.5 H1888.5 V15.5 H1879.5 Z M1882.5 8.5 V5.5 H1891.5 V12.5 H1888.5" fill="none" stroke="#222" stroke-width="1.6"/><path d="M1905.5 5.5 L1915.5 15.5 M1915.5 5.5 L1905.5 15.5" stroke="#222" stroke-width="2"/><rect x="222" y="31" width="15" height="10" rx="3" fill="none" stroke="#333" stroke-width="1.4"/><path d="M226.5 38 L229.5 34.5 L232.5 38 Z" fill="#333"/><path d="M240.8 34.8 L245.2 34.8 L243 37.6 Z" fill="#333"/><rect x="1867.5" y="155.5" width="7.5" height="2" fill="#333"/><rect x="1886.8" y="148" width="11.5" height="9.3" fill="none" stroke="#333" stroke-width="1.3"/><path d="M1892.5 148 V157.3 M1892.5 152.5 H1898.3" stroke="#333" stroke-width="1.2"/><path d="M1908.5 148.5 L1917 157 M1917 148.5 L1908.5 157" stroke="#333" stroke-width="1.4"/><path d="M1822.5 178.5 L1829.7 171.8 L1837 178.5 M1824.5 177 V185 H1835 V177" fill="#f4f4f4" stroke="#8a8a8a" stroke-width="1"/><rect x="1828.3" y="180" width="2.8" height="5" fill="#555"/><path d="M1881 172 L1886 168.5 V171 Q1897 171.5 1903.5 176 L1901.5 180.5 Q1895.5 176.5 1886 176 V178.5 Z" fill="#f8f8f8" stroke="#9a9a9a" stroke-width="0.9"/><path d="M1906 184 L1910.5 182.5 Q1914.5 189 1914 199 H1917.5 L1912 206 L1905.5 199 H1909 Q1909.5 190.5 1906 184 Z" fill="#f8f8f8" stroke="#9a9a9a" stroke-width="0.9"/><path d="M1854.5 186.5 H1867 L1860.7 193 Z" fill="#f8f8f8" stroke="#9a9a9a" stroke-width="0.9"/><path d="M1854.5 264.3 H1867 L1860.7 257 Z" fill="#f8f8f8" stroke="#9a9a9a" stroke-width="0.9"/><path d="M1821.5 219.5 V232 L1828.7 225.7 Z" fill="#f8f8f8" stroke="#9a9a9a" stroke-width="0.9"/><path d="M1900 219.5 V232 L1892.7 225.7 Z" fill="#f8f8f8" stroke="#9a9a9a" stroke-width="0.9"/><path d="M1902 252.5 H1913 M1902 255 H1913 L1907.5 261.3 Z" fill="#f8f8f8" stroke="#9a9a9a" stroke-width="0.9"/><defs><linearGradient id="cg" x1="0" y1="0" x2="0" y2="1"><stop offset="0" stop-color="#ececec"/><stop offset="1" stop-color="#bdbdbd"/></linearGradient><radialGradient id="sh" cx="0.5" cy="0.5" r="0.5"><stop offset="0" stop-color="#555" stop-opacity="0.8"/><stop offset="1" stop-color="#888" stop-opacity="0"/></radialGradient></defs><ellipse cx="1861" cy="253" rx="40" ry="5" fill="url(#sh)"/><rect x="1834.5" y="199.5" width="53" height="52" fill="url(#cg)" stroke="#6a6a6a" stroke-width="1"/><rect x="1843.8" y="208.8" width="33" height="33" fill="#b6bdca"/><rect x="1888.7" y="284.3" width="40" height="224" rx="3" fill="#f0f0f0" stroke="#a8a8a8" stroke-width="1"/><circle cx="1913.7" cy="290.9" r="2.6" fill="#777"/><path d="M1912.3 289.5 L1915.1 292.3 M1915.1 289.5 L1912.3 292.3" stroke="#eee" stroke-width="0.8"/><path d="M1905 303.3 H1914.5 Q1916 303.3 1916 305 V314.5 A10.5 10.5 0 1 1 1905 303.3 Z" fill="#e8e8e8" stroke="#555" stroke-width="1.2"/><circle cx="1905" cy="314.5" r="6.5" fill="#fafafa" stroke="#555" stroke-width="1.2"/><circle cx="1905" cy="313.5" r="3.8" fill="#c8c8c8"/><rect x="1904.5" y="336" width="1" height="1" fill="#555"/><rect x="1889" y="342.5" width="31" height="1" fill="#d0d0d0"/><path d="M1897 364 Q1894 360 1894.5 358.5 Q1896 357.5 1899 361 V352 Q1899 350.5 1900.5 350.5 Q1902 350.5 1902 352 V359 V350 Q1902 349 1903.5 349 Q1905 349 1905 350 V359 V351 Q1905 350 1906.5 350 Q1908 350 1908 351.5 V360 V354 Q1908 352.5 1909.5 352.5 Q1911 352.5 1911 354 V364 Q1911 372 1904 372 Q1899.5 372 1897 364 Z" fill="#fafafa" stroke="#444" stroke-width="1.1"/><path d="M1893.5 386 H1903 M1898.2 381.5 V390.5" stroke="#444" stroke-width="2"/><path d="M1893.5 394 H1903" stroke="#444" stroke-width="2"/><circle cx="1909" cy="396" r="4.7" fill="#fafafa" stroke="#444" stroke-width="1.3"/><path d="M1912.5 399.5 L1916.5 403.5" stroke="#444" stroke-width="2"/><rect x="1904.5" y="413.5" width="1" height="1" fill="#555"/><ellipse cx="1905" cy="437" rx="10.5" ry="4.5" fill="none" stroke="#444" stroke-width="1.2"/><ellipse cx="1905" cy="435" rx="4.5" ry="10.5" fill="none" stroke="#444" stroke-width="1.2"/><path d="M1902.5 435 H1907.5 M1905 432.5 V437.5" stroke="#444" stroke-width="1"/><rect x="1904.5" y="456" width="1" height="1" fill="#555"/><path d="M1894 472 L1899 467 V471 L1904 466 V471 H1915.5 V488.5 H1894 Z" fill="#f4f4f4" stroke="#a0a0a0" stroke-width="1"/><rect x="1897" y="476" width="15.5" height="8" fill="#d4d4d4" stroke="#aaa" stroke-width="0.8"/><circle cx="1913.7" cy="501.7" r="2.6" fill="#777"/><rect x="1912" y="501.2" width="3.4" height="1" fill="#eee"/><line x1="362.9" y1="961" x2="362.9" y2="975" stroke="#a8d8a8" stroke-width="1.6"/><path d="M357 961.3 H368.8 L362.9 952 Z" fill="#1fa51f"/><line x1="369" y1="980.8" x2="383" y2="980.8" stroke="#d8a8a8" stroke-width="1.6"/><path d="M382.5 975.4 V986.7 L392 981 Z" fill="#c4141e"/><circle cx="362.9" cy="980.8" r="6.2" fill="#1010c0"/><path d="M360.3 940.5 L363 944.5 L365.7 940.5 M363 944.5 V948.3" fill="none" stroke="#33cc33" stroke-width="1"/><path d="M395.5 976.3 L402 985.4 M402 976.3 L395.5 985.4" stroke="#dd2222" stroke-width="1.1"/><path d="M316.5 1046 L323.5 1039 L330.5 1046 M318.3 1044.5 V1053.3 H328.7 V1044.5 M322 1053.3 V1049.5 H325 V1053.3 M327.8 1040 V1042.5" fill="none" stroke="#444" stroke-width="1.4"/><path d="M437 1041 L443.5 1047.6 M443.5 1041 L437 1047.6" stroke="#444" stroke-width="1.3"/><path d="M544 1042 L551.5 1049.5 M551.5 1042 L544 1049.5" stroke="#444" stroke-width="1.3"/><path d="M1903 1039.5 H1917 M1903 1044.5 H1917 M1903 1049.5 H1917" stroke="#8a96a2" stroke-width="1.4"/></svg>
</body></html>
